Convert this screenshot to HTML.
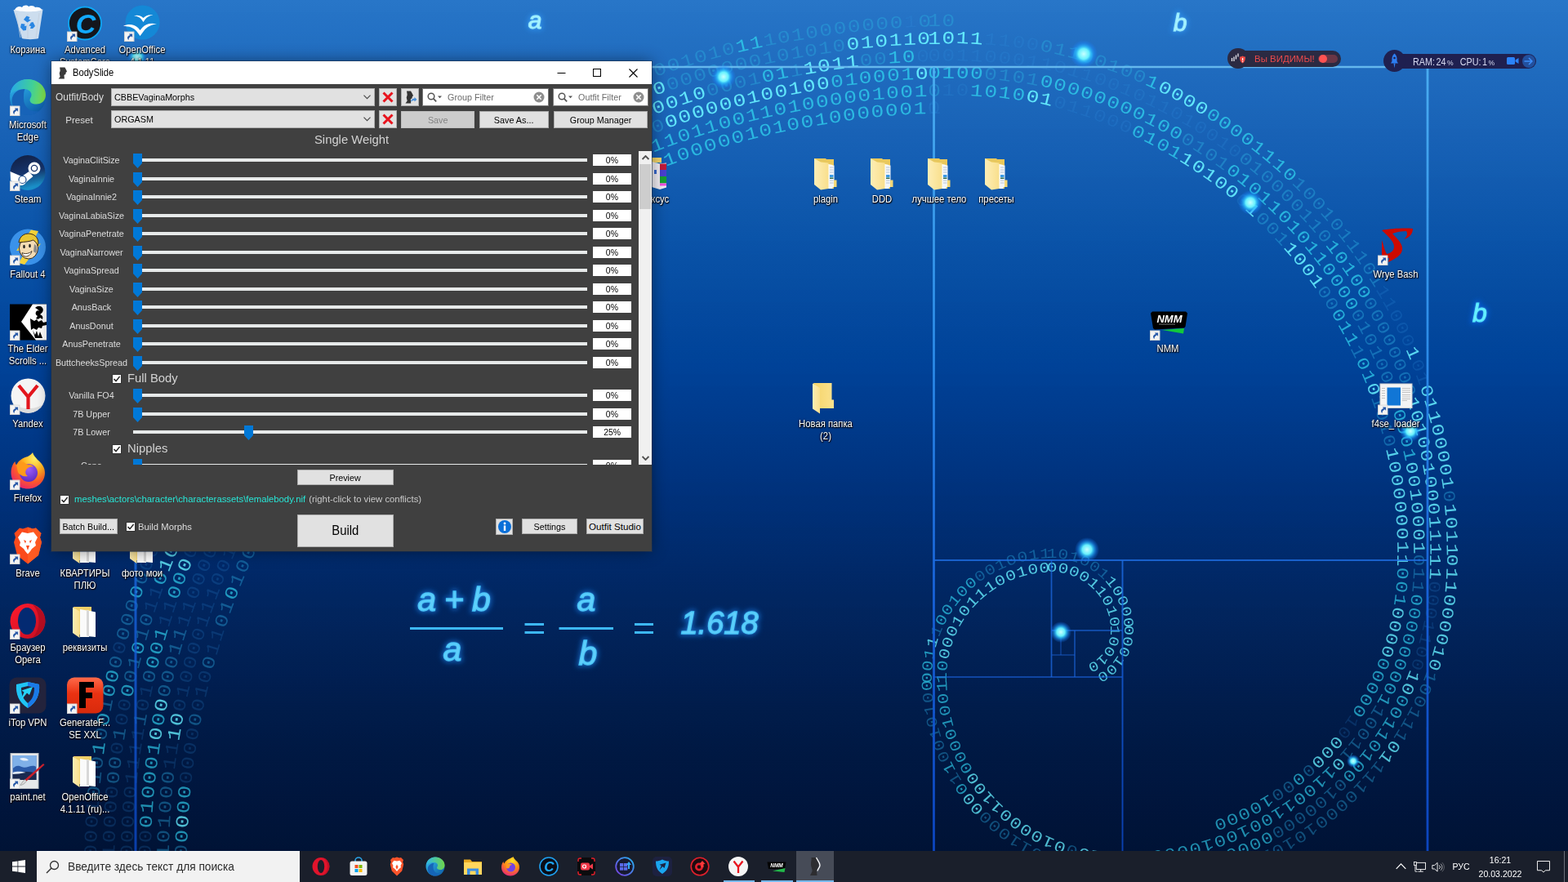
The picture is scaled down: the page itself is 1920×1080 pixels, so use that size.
<!DOCTYPE html>
<html lang="ru">
<head>
<meta charset="utf-8">
<title>Desktop - BodySlide</title>
<style>
*{box-sizing:border-box;margin:0;padding:0}
html,body{width:1920px;height:1080px;overflow:hidden;background:#021338}
body{font-family:"Liberation Sans",sans-serif;font-size:12px;color:#fff}
#desk{position:absolute;left:0;top:0;width:1920px;height:1080px;overflow:hidden;
 background:linear-gradient(180deg,#2876c8 0px,#1a64b8 150px,#0a53a8 300px,#004298 450px,#00327c 600px,#02255e 750px,#011a46 900px,#011336 1040px,#011336 1080px)}
#wall{position:absolute;left:0;top:0;width:1920px;height:1080px}
.abs{position:absolute}
</style>
</head>
<body>
<div id="desk">
<svg id="wall" width="1920" height="1080" viewBox="0 0 1920 1080">
<defs>
<filter id="gl" x="-50%" y="-50%" width="200%" height="200%"><feGaussianBlur stdDeviation="3.2"/></filter>
<filter id="gl2" x="-50%" y="-50%" width="200%" height="200%"><feGaussianBlur stdDeviation="1.2"/></filter>
<filter id="dg" x="-5%" y="-5%" width="110%" height="110%"><feGaussianBlur stdDeviation="0.35"/></filter>
<linearGradient id="dim" gradientUnits="userSpaceOnUse" x1="0" y1="0" x2="0" y2="1080"><stop offset="0" stop-color="#2876c8" stop-opacity="0"/><stop offset="0.139" stop-color="#1a64b8" stop-opacity="0.02"/><stop offset="0.278" stop-color="#0a53a8" stop-opacity="0.05"/><stop offset="0.417" stop-color="#004298" stop-opacity="0.09"/><stop offset="0.556" stop-color="#00327c" stop-opacity="0.13"/><stop offset="0.694" stop-color="#02255e" stop-opacity="0.16"/><stop offset="0.833" stop-color="#011a46" stop-opacity="0.18"/><stop offset="0.963" stop-color="#011336" stop-opacity="0.2"/><stop offset="1" stop-color="#011336" stop-opacity="0.2"/></linearGradient>
<linearGradient id="vl" gradientUnits="userSpaceOnUse" x1="0" y1="82" x2="0" y2="1060"><stop offset="0" stop-color="#4cb0f2"/><stop offset="0.35" stop-color="#2e90ec"/><stop offset="0.68" stop-color="#1762dc"/><stop offset="1" stop-color="#0b46c4"/></linearGradient>
<radialGradient id="dot"><stop offset="0" stop-color="#c8ffff"/><stop offset="0.38" stop-color="#6af4ff" stop-opacity="0.98"/><stop offset="0.55" stop-color="#2fc0ff" stop-opacity="0.8"/><stop offset="0.78" stop-color="#1a8cff" stop-opacity="0.4"/><stop offset="1" stop-color="#1c80ff" stop-opacity="0"/></radialGradient>

</defs>
<g font-family="'Liberation Mono','DejaVu Sans Mono',monospace" text-anchor="middle" filter="url(#dg)"><g fill="#66efff" fill-opacity="0.95"><text transform="translate(230.4 1006.3) rotate(273.4) scale(1.22 1)" font-size="22.4">0</text><text transform="translate(465.2 444.6) rotate(312.2) scale(1.22 1)" font-size="22.0">0</text><text transform="translate(514.2 394.3) rotate(316.6) scale(1.22 1)" font-size="22.0">0</text><text transform="translate(540.1 370.6) rotate(318.8) scale(1.22 1)" font-size="21.9">0</text><text transform="translate(790.4 213.9) rotate(337.3) scale(1.22 1)" font-size="21.7">0</text><text transform="translate(220.3 899.9) rotate(279.8) scale(1.22 1)" font-size="22.3">1</text><text transform="translate(223.5 882.3) rotate(280.9) scale(1.22 1)" font-size="22.3">0</text><text transform="translate(1263.1 124.9) rotate(372.0) scale(1.22 1)" font-size="21.4">0</text><text transform="translate(1279.8 128.0) rotate(373.7) scale(1.22 1)" font-size="21.3">1</text><text transform="translate(1449.9 200.5) rotate(392.2) scale(1.22 1)" font-size="21.1">1</text><text transform="translate(1463.9 209.7) rotate(393.9) scale(1.22 1)" font-size="21.1">0</text><text transform="translate(1477.7 219.3) rotate(395.6) scale(1.22 1)" font-size="21.0">1</text><text transform="translate(1491.1 229.2) rotate(397.2) scale(1.22 1)" font-size="21.0">0</text><text transform="translate(1504.2 239.6) rotate(398.9) scale(1.22 1)" font-size="21.0">0</text><text transform="translate(1529.5 261.3) rotate(402.2) scale(1.22 1)" font-size="20.9">1</text><text transform="translate(1576.0 309.0) rotate(408.9) scale(1.22 1)" font-size="20.9">1</text><text transform="translate(1586.7 321.6) rotate(410.5) scale(1.22 1)" font-size="20.8">0</text><text transform="translate(1597.0 334.6) rotate(412.2) scale(1.22 1)" font-size="20.8">0</text><text transform="translate(1606.9 347.9) rotate(413.9) scale(1.22 1)" font-size="20.8">1</text><text transform="translate(1675.8 478.7) rotate(428.7) scale(1.22 1)" font-size="20.6">0</text><text transform="translate(1698.6 557.1) rotate(436.9) scale(1.22 1)" font-size="20.5">1</text><text transform="translate(1701.8 573.1) rotate(438.6) scale(1.22 1)" font-size="20.5">0</text><text transform="translate(1704.5 589.1) rotate(440.2) scale(1.22 1)" font-size="20.4">0</text><text transform="translate(1706.8 605.2) rotate(441.8) scale(1.22 1)" font-size="20.4">0</text><text transform="translate(1708.6 621.4) rotate(443.5) scale(1.22 1)" font-size="20.4">0</text><text transform="translate(1709.9 637.5) rotate(445.1) scale(1.22 1)" font-size="20.4">0</text><text transform="translate(1710.8 653.7) rotate(446.7) scale(1.22 1)" font-size="20.3">0</text><text transform="translate(1711.2 669.9) rotate(448.4) scale(1.22 1)" font-size="20.3">1</text><text transform="translate(1711.2 686.0) rotate(90.0) scale(1.22 1)" font-size="20.3">1</text><text transform="translate(1705.3 749.6) rotate(100.9) scale(1.22 1)" font-size="20.2">0</text><text transform="translate(1702.0 765.2) rotate(103.6) scale(1.22 1)" font-size="20.2">0</text><text transform="translate(1697.9 780.6) rotate(106.3) scale(1.22 1)" font-size="20.1">0</text><text transform="translate(1693.1 795.8) rotate(109.0) scale(1.22 1)" font-size="20.1">0</text><text transform="translate(1631.2 905.2) rotate(130.4) scale(1.22 1)" font-size="19.9">0</text><text transform="translate(1620.7 916.9) rotate(133.1) scale(1.22 1)" font-size="19.9">0</text><text transform="translate(1609.8 928.2) rotate(135.8) scale(1.22 1)" font-size="19.8">0</text><text transform="translate(197.9 899.8) rotate(279.6) scale(1.22 1)" font-size="22.3">0</text><text transform="translate(204.5 864.7) rotate(281.7) scale(1.22 1)" font-size="22.3">0</text><text transform="translate(824.2 154.7) rotate(340.5) scale(1.22 1)" font-size="21.7">0</text><text transform="translate(840.6 149.1) rotate(341.6) scale(1.22 1)" font-size="21.7">0</text><text transform="translate(857.1 143.7) rotate(342.6) scale(1.22 1)" font-size="21.7">0</text><text transform="translate(873.7 138.7) rotate(343.7) scale(1.22 1)" font-size="21.7">0</text><text transform="translate(890.4 134.0) rotate(344.7) scale(1.22 1)" font-size="21.7">0</text><text transform="translate(907.1 129.5) rotate(345.7) scale(1.22 1)" font-size="21.7">0</text><text transform="translate(924.0 125.4) rotate(346.8) scale(1.22 1)" font-size="21.6">1</text><text transform="translate(940.8 121.6) rotate(347.8) scale(1.22 1)" font-size="21.6">0</text><text transform="translate(957.8 118.1) rotate(348.8) scale(1.22 1)" font-size="21.6">0</text><text transform="translate(974.8 114.9) rotate(349.8) scale(1.22 1)" font-size="21.6">1</text><text transform="translate(991.8 112.0) rotate(350.9) scale(1.22 1)" font-size="21.6">0</text><text transform="translate(1008.8 109.0) rotate(351.9) scale(1.22 1)" font-size="21.6">0</text><text transform="translate(1128.8 96.6) rotate(359.1) scale(1.22 1)" font-size="21.5">0</text><text transform="translate(1722.5 574.1) rotate(439.0) scale(1.22 1)" font-size="20.5">0</text><text transform="translate(1725.1 590.1) rotate(440.6) scale(1.22 1)" font-size="20.4">0</text><text transform="translate(1727.3 606.3) rotate(442.2) scale(1.22 1)" font-size="20.4">1</text><text transform="translate(1728.9 622.4) rotate(443.8) scale(1.22 1)" font-size="20.4">0</text><text transform="translate(1730.2 638.6) rotate(445.4) scale(1.22 1)" font-size="20.4">0</text><text transform="translate(1731.0 654.8) rotate(447.0) scale(1.22 1)" font-size="20.3">0</text><text transform="translate(1731.3 671.0) rotate(448.5) scale(1.22 1)" font-size="20.3">1</text><text transform="translate(1634.3 931.2) rotate(133.3) scale(1.22 1)" font-size="19.9">0</text><text transform="translate(1358.8 1043.5) rotate(184.1) scale(1.22 1)" font-size="19.4">1</text><text transform="translate(1343.8 1041.9) rotate(188.1) scale(1.22 1)" font-size="19.3">1</text><text transform="translate(1328.9 1039.3) rotate(192.2) scale(1.22 1)" font-size="19.3">0</text><text transform="translate(1300.0 1031.0) rotate(200.2) scale(1.22 1)" font-size="19.2">0</text><text transform="translate(1286.1 1025.3) rotate(204.2) scale(1.22 1)" font-size="19.1">1</text><text transform="translate(1272.7 1018.8) rotate(208.2) scale(1.22 1)" font-size="19.1">0</text><text transform="translate(1259.7 1011.3) rotate(212.2) scale(1.22 1)" font-size="19.1">0</text><text transform="translate(1247.4 1002.9) rotate(216.2) scale(1.22 1)" font-size="19.0">0</text><text transform="translate(1235.7 993.7) rotate(220.2) scale(1.22 1)" font-size="19.0">0</text><text transform="translate(1224.6 983.8) rotate(224.2) scale(1.22 1)" font-size="18.9">1</text><text transform="translate(1214.3 973.1) rotate(228.1) scale(1.22 1)" font-size="18.9">1</text><text transform="translate(1204.8 961.8) rotate(232.1) scale(1.22 1)" font-size="18.9">0</text><text transform="translate(1196.1 949.8) rotate(236.0) scale(1.22 1)" font-size="18.8">0</text><text transform="translate(1162.2 801.8) rotate(282.6) scale(1.22 1)" font-size="18.3">0</text><text transform="translate(1166.0 788.3) rotate(288.9) scale(1.22 1)" font-size="18.3">0</text><text transform="translate(1171.2 775.2) rotate(295.1) scale(1.22 1)" font-size="18.2">0</text><text transform="translate(1177.8 762.9) rotate(301.3) scale(1.22 1)" font-size="18.1">1</text><text transform="translate(1185.6 751.3) rotate(307.5) scale(1.22 1)" font-size="18.0">0</text><text transform="translate(1194.6 740.8) rotate(313.7) scale(1.22 1)" font-size="18.0">1</text><text transform="translate(1204.6 731.2) rotate(319.8) scale(1.22 1)" font-size="17.9">1</text><text transform="translate(1215.6 722.9) rotate(325.9) scale(1.22 1)" font-size="17.8">1</text><text transform="translate(1227.3 715.8) rotate(332.0) scale(1.22 1)" font-size="17.8">0</text><text transform="translate(1239.7 709.9) rotate(338.1) scale(1.22 1)" font-size="17.7">0</text><text transform="translate(1252.6 705.5) rotate(344.1) scale(1.22 1)" font-size="17.6">1</text><text transform="translate(1265.8 702.4) rotate(350.1) scale(1.22 1)" font-size="17.5">0</text><text transform="translate(1279.2 700.7) rotate(356.1) scale(1.22 1)" font-size="17.5">0</text><text transform="translate(1288.0 700.4) rotate(360.0) scale(1.22 1)" font-size="17.4">0</text><text transform="translate(1300.9 701.5) rotate(370.4) scale(1.22 1)" font-size="17.4">0</text><text transform="translate(1313.4 704.9) rotate(380.7) scale(1.22 1)" font-size="17.3">0</text><text transform="translate(1325.0 710.5) rotate(391.1) scale(1.22 1)" font-size="17.2">0</text><text transform="translate(1335.4 718.1) rotate(401.3) scale(1.22 1)" font-size="17.2">1</text><text transform="translate(1344.3 727.3) rotate(411.6) scale(1.22 1)" font-size="17.1">1</text><text transform="translate(1351.4 738.0) rotate(421.8) scale(1.22 1)" font-size="17.1">0</text><text transform="translate(1356.4 749.7) rotate(431.9) scale(1.22 1)" font-size="17.0">1</text><text transform="translate(1359.3 762.0) rotate(442.0) scale(1.22 1)" font-size="17.0">0</text><text transform="translate(1360.0 772.0) rotate(90.0) scale(1.22 1)" font-size="16.9">1</text><text transform="translate(1358.5 784.0) rotate(105.7) scale(1.22 1)" font-size="16.8">0</text><text transform="translate(1353.7 795.0) rotate(121.4) scale(1.22 1)" font-size="16.7">0</text><text transform="translate(1346.2 804.3) rotate(136.9) scale(1.22 1)" font-size="16.7">1</text><text transform="translate(1336.6 811.3) rotate(152.3) scale(1.22 1)" font-size="16.6">0</text><text transform="translate(232.9 694.4) rotate(291.9) scale(1.22 1)" font-size="22.2">0</text><text transform="translate(420.1 397.0) rotate(312.5) scale(1.22 1)" font-size="22.0">1</text><text transform="translate(456.7 359.1) rotate(315.6) scale(1.22 1)" font-size="22.0">0</text><text transform="translate(508.6 311.8) rotate(319.7) scale(1.22 1)" font-size="21.9">1</text><text transform="translate(636.2 220.0) rotate(328.8) scale(1.22 1)" font-size="21.8">0</text><text transform="translate(651.2 211.1) rotate(329.9) scale(1.22 1)" font-size="21.8">1</text><text transform="translate(666.4 202.4) rotate(330.9) scale(1.22 1)" font-size="21.8">0</text><text transform="translate(681.7 194.1) rotate(331.9) scale(1.22 1)" font-size="21.8">1</text><text transform="translate(697.1 186.0) rotate(332.9) scale(1.22 1)" font-size="21.8">0</text><text transform="translate(712.7 178.2) rotate(333.9) scale(1.22 1)" font-size="21.8">1</text><text transform="translate(728.4 170.7) rotate(335.0) scale(1.22 1)" font-size="21.8">0</text><text transform="translate(744.2 163.5) rotate(336.0) scale(1.22 1)" font-size="21.8">1</text><text transform="translate(760.2 156.6) rotate(337.0) scale(1.22 1)" font-size="21.7">0</text><text transform="translate(776.2 149.9) rotate(338.0) scale(1.22 1)" font-size="21.7">0</text><text transform="translate(808.7 137.5) rotate(340.0) scale(1.22 1)" font-size="21.7">0</text><text transform="translate(825.0 131.7) rotate(341.0) scale(1.22 1)" font-size="21.7">0</text><text transform="translate(841.5 126.2) rotate(342.1) scale(1.22 1)" font-size="21.7">1</text><text transform="translate(858.0 121.0) rotate(343.1) scale(1.22 1)" font-size="21.7">0</text><text transform="translate(992.9 90.1) rotate(351.1) scale(1.22 1)" font-size="21.6">1</text><text transform="translate(1009.9 87.2) rotate(352.2) scale(1.22 1)" font-size="21.6">0</text><text transform="translate(1027.0 84.6) rotate(353.2) scale(1.22 1)" font-size="21.6">1</text><text transform="translate(1044.1 82.3) rotate(354.2) scale(1.22 1)" font-size="21.6">1</text><text transform="translate(1724.5 495.7) rotate(431.8) scale(1.22 1)" font-size="20.5">1</text><text transform="translate(1729.1 511.4) rotate(433.4) scale(1.22 1)" font-size="20.5">0</text><text transform="translate(1733.3 527.2) rotate(434.9) scale(1.22 1)" font-size="20.5">1</text><text transform="translate(1737.0 543.1) rotate(436.4) scale(1.22 1)" font-size="20.5">0</text><text transform="translate(1740.4 559.0) rotate(438.0) scale(1.22 1)" font-size="20.5">0</text><text transform="translate(1743.2 575.1) rotate(439.5) scale(1.22 1)" font-size="20.4">1</text><text transform="translate(1745.7 591.2) rotate(441.0) scale(1.22 1)" font-size="20.4">0</text><text transform="translate(1747.7 607.3) rotate(442.6) scale(1.22 1)" font-size="20.4">0</text><text transform="translate(1749.3 623.5) rotate(444.1) scale(1.22 1)" font-size="20.4">0</text><text transform="translate(1750.4 639.7) rotate(445.6) scale(1.22 1)" font-size="20.4">1</text><text transform="translate(1751.2 655.9) rotate(447.2) scale(1.22 1)" font-size="20.3">1</text><text transform="translate(1751.4 672.1) rotate(448.7) scale(1.22 1)" font-size="20.3">1</text><text transform="translate(1751.3 686.0) rotate(90.0) scale(1.22 1)" font-size="20.3">1</text><text transform="translate(1751.0 702.1) rotate(92.4) scale(1.22 1)" font-size="20.3">1</text><text transform="translate(1724.2 826.4) rotate(111.8) scale(1.22 1)" font-size="20.1">1</text><text transform="translate(1718.0 841.0) rotate(114.3) scale(1.22 1)" font-size="20.1">0</text><text transform="translate(1200.7 986.0) rotate(228.0) scale(1.22 1)" font-size="18.9">0</text><text transform="translate(1191.2 974.6) rotate(231.6) scale(1.22 1)" font-size="18.9">0</text><text transform="translate(1147.1 787.9) rotate(286.6) scale(1.22 1)" font-size="18.3">1</text><text transform="translate(1356.7 715.7) rotate(410.7) scale(1.22 1)" font-size="17.1">1</text><text transform="translate(1364.2 726.3) rotate(419.0) scale(1.22 1)" font-size="17.1">0</text><text transform="translate(1370.0 737.8) rotate(427.4) scale(1.22 1)" font-size="17.0">0</text><text transform="translate(1374.1 750.1) rotate(435.7) scale(1.22 1)" font-size="17.0">0</text><text transform="translate(1376.3 762.7) rotate(444.0) scale(1.22 1)" font-size="17.0">0</text><text transform="translate(1376.8 772.0) rotate(90.0) scale(1.22 1)" font-size="16.9">0</text><text transform="translate(1375.5 784.4) rotate(101.8) scale(1.22 1)" font-size="16.9">0</text><text transform="translate(1371.7 796.2) rotate(113.5) scale(1.22 1)" font-size="16.8">0</text><text transform="translate(1365.7 807.0) rotate(125.2) scale(1.22 1)" font-size="16.7">1</text><text transform="translate(1357.6 816.3) rotate(136.8) scale(1.22 1)" font-size="16.7">0</text><text transform="translate(1347.8 823.7) rotate(148.4) scale(1.22 1)" font-size="16.6">0</text><text transform="translate(209.5 694.0) rotate(291.4) scale(1.22 1)" font-size="22.2">1</text><text transform="translate(216.1 677.5) rotate(292.4) scale(1.22 1)" font-size="22.2">0</text><text transform="translate(681.9 169.6) rotate(332.6) scale(1.22 1)" font-size="21.8">0</text><text transform="translate(697.4 161.7) rotate(333.6) scale(1.22 1)" font-size="21.8">0</text><text transform="translate(713.1 154.1) rotate(334.6) scale(1.22 1)" font-size="21.8">0</text><text transform="translate(728.9 146.8) rotate(335.6) scale(1.22 1)" font-size="21.8">1</text><text transform="translate(809.5 114.4) rotate(340.5) scale(1.22 1)" font-size="21.7">0</text><text transform="translate(1045.2 60.6) rotate(354.4) scale(1.22 1)" font-size="21.6">0</text><text transform="translate(1062.4 58.7) rotate(355.3) scale(1.22 1)" font-size="21.6">1</text><text transform="translate(1079.6 57.0) rotate(356.3) scale(1.22 1)" font-size="21.6">0</text><text transform="translate(1096.8 55.7) rotate(357.3) scale(1.22 1)" font-size="21.5">1</text><text transform="translate(1114.0 54.7) rotate(358.3) scale(1.22 1)" font-size="21.5">1</text><text transform="translate(1131.2 53.9) rotate(359.3) scale(1.22 1)" font-size="21.5">0</text><text transform="translate(1144.0 53.5) rotate(360.0) scale(1.22 1)" font-size="21.5">1</text><text transform="translate(1161.1 53.2) rotate(361.6) scale(1.22 1)" font-size="21.5">0</text><text transform="translate(1178.3 53.3) rotate(363.1) scale(1.22 1)" font-size="21.5">1</text><text transform="translate(1195.4 53.8) rotate(364.6) scale(1.22 1)" font-size="21.5">1</text><text transform="translate(1423.6 113.8) rotate(386.0) scale(1.22 1)" font-size="21.2">0</text><text transform="translate(1438.6 121.5) rotate(387.6) scale(1.22 1)" font-size="21.1">0</text><text transform="translate(1453.3 129.6) rotate(389.1) scale(1.22 1)" font-size="21.1">0</text><text transform="translate(1467.9 138.0) rotate(390.6) scale(1.22 1)" font-size="21.1">0</text><text transform="translate(1724.3 434.6) rotate(426.6) scale(1.22 1)" font-size="20.6">1</text><text transform="translate(1741.2 480.9) rotate(431.0) scale(1.22 1)" font-size="20.6">0</text><text transform="translate(1746.0 496.5) rotate(432.5) scale(1.22 1)" font-size="20.5">1</text><text transform="translate(1750.4 512.3) rotate(434.0) scale(1.22 1)" font-size="20.5">1</text><text transform="translate(1754.4 528.1) rotate(435.5) scale(1.22 1)" font-size="20.5">0</text><text transform="translate(1758.0 544.0) rotate(437.0) scale(1.22 1)" font-size="20.5">0</text><text transform="translate(1761.2 560.1) rotate(438.5) scale(1.22 1)" font-size="20.5">0</text><text transform="translate(1763.9 576.1) rotate(439.9) scale(1.22 1)" font-size="20.4">0</text><text transform="translate(1766.2 592.2) rotate(441.4) scale(1.22 1)" font-size="20.4">1</text><text transform="translate(1769.6 624.6) rotate(444.4) scale(1.22 1)" font-size="20.4">1</text><text transform="translate(1770.7 640.8) rotate(445.9) scale(1.22 1)" font-size="20.4">0</text><text transform="translate(1771.3 657.0) rotate(447.4) scale(1.22 1)" font-size="20.3">1</text><text transform="translate(1771.6 673.2) rotate(448.8) scale(1.22 1)" font-size="20.3">1</text><text transform="translate(1771.5 686.0) rotate(90.0) scale(1.22 1)" font-size="20.3">0</text><text transform="translate(1771.1 702.1) rotate(92.3) scale(1.22 1)" font-size="20.3">1</text><text transform="translate(1770.1 718.1) rotate(94.6) scale(1.22 1)" font-size="20.3">1</text><text transform="translate(1768.5 734.1) rotate(96.9) scale(1.22 1)" font-size="20.2">0</text><text transform="translate(1766.2 749.9) rotate(99.3) scale(1.22 1)" font-size="20.2">0</text><text transform="translate(1763.3 765.6) rotate(101.6) scale(1.22 1)" font-size="20.2">0</text><text transform="translate(1759.7 781.2) rotate(103.9) scale(1.22 1)" font-size="20.2">0</text><text transform="translate(1755.5 796.6) rotate(106.2) scale(1.22 1)" font-size="20.1">1</text><text transform="translate(1750.8 811.9) rotate(108.5) scale(1.22 1)" font-size="20.1">0</text><text transform="translate(1701.2 910.9) rotate(124.5) scale(1.22 1)" font-size="20.0">0</text><text transform="translate(1692.0 923.8) rotate(126.8) scale(1.22 1)" font-size="19.9">1</text></g>
<g fill="#30cdec" fill-opacity="0.82"><text transform="translate(229.5 1024.2) rotate(272.2) scale(1.22 1)" font-size="22.4">0</text><text transform="translate(231.6 988.5) rotate(274.5) scale(1.22 1)" font-size="22.4">0</text><text transform="translate(233.1 970.7) rotate(275.6) scale(1.22 1)" font-size="22.4">0</text><text transform="translate(290.3 728.8) rotate(291.2) scale(1.22 1)" font-size="22.2">0</text><text transform="translate(318.4 663.7) rotate(295.6) scale(1.22 1)" font-size="22.2">1</text><text transform="translate(409.4 512.6) rotate(306.7) scale(1.22 1)" font-size="22.1">0</text><text transform="translate(420.0 498.5) rotate(307.8) scale(1.22 1)" font-size="22.0">0</text><text transform="translate(453.5 457.7) rotate(311.1) scale(1.22 1)" font-size="22.0">1</text><text transform="translate(477.1 431.6) rotate(313.3) scale(1.22 1)" font-size="22.0">1</text><text transform="translate(489.2 418.9) rotate(314.4) scale(1.22 1)" font-size="22.0">0</text><text transform="translate(501.6 406.5) rotate(315.5) scale(1.22 1)" font-size="22.0">0</text><text transform="translate(527.0 382.3) rotate(317.7) scale(1.22 1)" font-size="21.9">0</text><text transform="translate(553.4 359.2) rotate(319.9) scale(1.22 1)" font-size="21.9">0</text><text transform="translate(566.8 348.0) rotate(321.0) scale(1.22 1)" font-size="21.9">1</text><text transform="translate(806.5 207.3) rotate(338.4) scale(1.22 1)" font-size="21.7">0</text><text transform="translate(822.7 201.1) rotate(339.5) scale(1.22 1)" font-size="21.7">1</text><text transform="translate(839.0 195.1) rotate(340.6) scale(1.22 1)" font-size="21.7">0</text><text transform="translate(855.4 189.5) rotate(341.7) scale(1.22 1)" font-size="21.7">0</text><text transform="translate(871.9 184.1) rotate(342.7) scale(1.22 1)" font-size="21.7">0</text><text transform="translate(888.5 179.1) rotate(343.8) scale(1.22 1)" font-size="21.7">0</text><text transform="translate(905.2 174.4) rotate(344.9) scale(1.22 1)" font-size="21.7">0</text><text transform="translate(921.9 170.0) rotate(346.0) scale(1.22 1)" font-size="21.7">1</text><text transform="translate(938.8 166.0) rotate(347.1) scale(1.22 1)" font-size="21.6">0</text><text transform="translate(955.6 162.2) rotate(348.2) scale(1.22 1)" font-size="21.6">1</text><text transform="translate(972.6 158.8) rotate(349.2) scale(1.22 1)" font-size="21.6">0</text><text transform="translate(989.6 155.7) rotate(350.3) scale(1.22 1)" font-size="21.6">0</text><text transform="translate(1006.6 152.8) rotate(351.4) scale(1.22 1)" font-size="21.6">1</text><text transform="translate(1023.6 149.9) rotate(352.5) scale(1.22 1)" font-size="21.6">0</text><text transform="translate(1040.7 147.3) rotate(353.5) scale(1.22 1)" font-size="21.6">0</text><text transform="translate(1057.8 145.1) rotate(354.6) scale(1.22 1)" font-size="21.6">0</text><text transform="translate(1074.9 143.2) rotate(355.7) scale(1.22 1)" font-size="21.6">0</text><text transform="translate(1092.1 141.6) rotate(356.8) scale(1.22 1)" font-size="21.5">0</text><text transform="translate(1109.3 140.3) rotate(357.8) scale(1.22 1)" font-size="21.5">0</text><text transform="translate(1126.5 139.4) rotate(358.9) scale(1.22 1)" font-size="21.5">1</text><text transform="translate(727.7 218.9) rotate(333.7) scale(1.22 1)" font-size="21.8">0</text><text transform="translate(743.3 211.3) rotate(334.7) scale(1.22 1)" font-size="21.8">0</text><text transform="translate(759.1 204.0) rotate(335.8) scale(1.22 1)" font-size="21.8">0</text><text transform="translate(775.0 197.0) rotate(336.8) scale(1.22 1)" font-size="21.7">0</text><text transform="translate(791.1 190.3) rotate(337.9) scale(1.22 1)" font-size="21.7">0</text><text transform="translate(807.2 183.9) rotate(339.0) scale(1.22 1)" font-size="21.7">1</text><text transform="translate(823.5 177.8) rotate(340.0) scale(1.22 1)" font-size="21.7">1</text><text transform="translate(839.8 172.1) rotate(341.1) scale(1.22 1)" font-size="21.7">0</text><text transform="translate(856.3 166.6) rotate(342.1) scale(1.22 1)" font-size="21.7">1</text><text transform="translate(872.8 161.4) rotate(343.2) scale(1.22 1)" font-size="21.7">1</text><text transform="translate(889.4 156.5) rotate(344.3) scale(1.22 1)" font-size="21.7">0</text><text transform="translate(906.2 152.0) rotate(345.3) scale(1.22 1)" font-size="21.7">0</text><text transform="translate(922.9 147.7) rotate(346.4) scale(1.22 1)" font-size="21.7">1</text><text transform="translate(939.8 143.8) rotate(347.4) scale(1.22 1)" font-size="21.6">1</text><text transform="translate(956.7 140.1) rotate(348.5) scale(1.22 1)" font-size="21.6">0</text><text transform="translate(973.7 136.8) rotate(349.5) scale(1.22 1)" font-size="21.6">1</text><text transform="translate(990.7 133.8) rotate(350.6) scale(1.22 1)" font-size="21.6">0</text><text transform="translate(1007.7 130.9) rotate(351.7) scale(1.22 1)" font-size="21.6">0</text><text transform="translate(1024.7 128.1) rotate(352.7) scale(1.22 1)" font-size="21.6">0</text><text transform="translate(1041.8 125.6) rotate(353.8) scale(1.22 1)" font-size="21.6">0</text><text transform="translate(1058.9 123.5) rotate(354.8) scale(1.22 1)" font-size="21.6">0</text><text transform="translate(1076.1 121.6) rotate(355.9) scale(1.22 1)" font-size="21.6">1</text><text transform="translate(1093.3 120.1) rotate(356.9) scale(1.22 1)" font-size="21.5">0</text><text transform="translate(1110.4 118.9) rotate(358.0) scale(1.22 1)" font-size="21.5">0</text><text transform="translate(1127.6 118.0) rotate(359.0) scale(1.22 1)" font-size="21.5">1</text><text transform="translate(1195.3 117.6) rotate(365.2) scale(1.22 1)" font-size="21.4">1</text><text transform="translate(1212.4 118.6) rotate(366.9) scale(1.22 1)" font-size="21.4">0</text><text transform="translate(1229.4 120.2) rotate(368.6) scale(1.22 1)" font-size="21.4">1</text><text transform="translate(1246.3 122.3) rotate(370.3) scale(1.22 1)" font-size="21.4">0</text><text transform="translate(1391.1 167.9) rotate(385.5) scale(1.22 1)" font-size="21.2">0</text><text transform="translate(1406.2 175.4) rotate(387.2) scale(1.22 1)" font-size="21.1">1</text><text transform="translate(1421.0 183.4) rotate(388.9) scale(1.22 1)" font-size="21.1">0</text><text transform="translate(1435.6 191.7) rotate(390.5) scale(1.22 1)" font-size="21.1">1</text><text transform="translate(1633.7 389.6) rotate(418.8) scale(1.22 1)" font-size="20.7">0</text><text transform="translate(1641.8 403.9) rotate(420.5) scale(1.22 1)" font-size="20.7">1</text><text transform="translate(1649.5 418.5) rotate(422.1) scale(1.22 1)" font-size="20.7">1</text><text transform="translate(1663.5 448.2) rotate(425.4) scale(1.22 1)" font-size="20.6">0</text><text transform="translate(1669.9 463.4) rotate(427.1) scale(1.22 1)" font-size="20.6">1</text><text transform="translate(1710.8 702.0) rotate(92.7) scale(1.22 1)" font-size="20.3">0</text><text transform="translate(1709.7 718.0) rotate(95.4) scale(1.22 1)" font-size="20.2">0</text><text transform="translate(1707.9 733.9) rotate(98.2) scale(1.22 1)" font-size="20.2">1</text><text transform="translate(1687.7 810.7) rotate(111.7) scale(1.22 1)" font-size="20.1">0</text><text transform="translate(1681.5 825.3) rotate(114.4) scale(1.22 1)" font-size="20.1">0</text><text transform="translate(1674.7 839.6) rotate(117.1) scale(1.22 1)" font-size="20.0">0</text><text transform="translate(1667.2 853.5) rotate(119.7) scale(1.22 1)" font-size="20.0">0</text><text transform="translate(1659.1 867.1) rotate(122.4) scale(1.22 1)" font-size="20.0">0</text><text transform="translate(1586.4 949.0) rotate(141.1) scale(1.22 1)" font-size="19.8">0</text><text transform="translate(1548.1 976.0) rotate(149.0) scale(1.22 1)" font-size="19.7">1</text><text transform="translate(1534.6 983.7) rotate(151.6) scale(1.22 1)" font-size="19.7">0</text><text transform="translate(1520.8 990.8) rotate(154.3) scale(1.22 1)" font-size="19.7">0</text><text transform="translate(1506.7 997.3) rotate(156.9) scale(1.22 1)" font-size="19.6">0</text><text transform="translate(1492.3 1003.1) rotate(159.5) scale(1.22 1)" font-size="19.6">0</text><text transform="translate(186.0 1006.3) rotate(273.2) scale(1.22 1)" font-size="22.4">0</text><text transform="translate(187.1 988.4) rotate(274.3) scale(1.22 1)" font-size="22.4">1</text><text transform="translate(188.6 970.6) rotate(275.3) scale(1.22 1)" font-size="22.4">0</text><text transform="translate(190.4 952.8) rotate(276.4) scale(1.22 1)" font-size="22.4">0</text><text transform="translate(192.6 935.1) rotate(277.5) scale(1.22 1)" font-size="22.3">0</text><text transform="translate(195.1 917.4) rotate(278.5) scale(1.22 1)" font-size="22.3">1</text><text transform="translate(201.0 882.2) rotate(280.7) scale(1.22 1)" font-size="22.3">0</text><text transform="translate(328.9 553.2) rotate(301.9) scale(1.22 1)" font-size="22.1">1</text><text transform="translate(564.5 294.7) rotate(322.9) scale(1.22 1)" font-size="21.9">0</text><text transform="translate(607.1 264.2) rotate(326.0) scale(1.22 1)" font-size="21.9">0</text><text transform="translate(621.7 254.6) rotate(327.0) scale(1.22 1)" font-size="21.8">0</text><text transform="translate(636.4 245.2) rotate(328.1) scale(1.22 1)" font-size="21.8">1</text><text transform="translate(651.3 236.1) rotate(329.1) scale(1.22 1)" font-size="21.8">1</text><text transform="translate(666.4 227.3) rotate(330.2) scale(1.22 1)" font-size="21.8">1</text><text transform="translate(681.6 218.7) rotate(331.2) scale(1.22 1)" font-size="21.8">0</text><text transform="translate(1025.9 106.3) rotate(352.9) scale(1.22 1)" font-size="21.6">0</text><text transform="translate(1043.0 103.9) rotate(354.0) scale(1.22 1)" font-size="21.6">1</text><text transform="translate(1060.1 101.9) rotate(355.0) scale(1.22 1)" font-size="21.6">0</text><text transform="translate(1077.2 100.1) rotate(356.0) scale(1.22 1)" font-size="21.6">0</text><text transform="translate(1094.4 98.6) rotate(357.0) scale(1.22 1)" font-size="21.5">0</text><text transform="translate(1111.6 97.5) rotate(358.1) scale(1.22 1)" font-size="21.5">1</text><text transform="translate(1144.0 96.1) rotate(360.0) scale(1.22 1)" font-size="21.5">0</text><text transform="translate(1161.1 95.7) rotate(361.7) scale(1.22 1)" font-size="21.5">1</text><text transform="translate(1178.3 95.8) rotate(363.3) scale(1.22 1)" font-size="21.5">0</text><text transform="translate(1195.4 96.3) rotate(365.0) scale(1.22 1)" font-size="21.4">0</text><text transform="translate(1280.0 106.5) rotate(373.2) scale(1.22 1)" font-size="21.3">0</text><text transform="translate(1296.4 110.5) rotate(374.8) scale(1.22 1)" font-size="21.3">0</text><text transform="translate(1312.8 115.1) rotate(376.5) scale(1.22 1)" font-size="21.3">0</text><text transform="translate(1328.9 120.2) rotate(378.1) scale(1.22 1)" font-size="21.3">0</text><text transform="translate(1344.9 125.8) rotate(379.7) scale(1.22 1)" font-size="21.2">0</text><text transform="translate(1360.7 131.8) rotate(381.4) scale(1.22 1)" font-size="21.2">0</text><text transform="translate(1376.3 138.2) rotate(383.0) scale(1.22 1)" font-size="21.2">0</text><text transform="translate(1391.8 145.1) rotate(384.6) scale(1.22 1)" font-size="21.2">0</text><text transform="translate(1407.0 152.4) rotate(386.2) scale(1.22 1)" font-size="21.2">1</text><text transform="translate(1421.9 160.1) rotate(387.9) scale(1.22 1)" font-size="21.1">0</text><text transform="translate(1436.7 168.2) rotate(389.5) scale(1.22 1)" font-size="21.1">0</text><text transform="translate(1506.4 214.7) rotate(397.6) scale(1.22 1)" font-size="21.0">0</text><text transform="translate(1519.4 225.1) rotate(399.2) scale(1.22 1)" font-size="21.0">1</text><text transform="translate(1532.2 235.9) rotate(400.8) scale(1.22 1)" font-size="21.0">0</text><text transform="translate(1544.6 247.0) rotate(402.4) scale(1.22 1)" font-size="20.9">1</text><text transform="translate(1556.7 258.5) rotate(404.0) scale(1.22 1)" font-size="20.9">1</text><text transform="translate(1568.5 270.3) rotate(405.6) scale(1.22 1)" font-size="20.9">0</text><text transform="translate(1579.9 282.4) rotate(407.2) scale(1.22 1)" font-size="20.9">1</text><text transform="translate(1591.0 294.8) rotate(408.8) scale(1.22 1)" font-size="20.9">0</text><text transform="translate(1601.7 307.4) rotate(410.4) scale(1.22 1)" font-size="20.8">1</text><text transform="translate(1612.1 320.4) rotate(412.0) scale(1.22 1)" font-size="20.8">1</text><text transform="translate(1622.0 333.6) rotate(413.6) scale(1.22 1)" font-size="20.8">0</text><text transform="translate(1631.5 347.2) rotate(415.2) scale(1.22 1)" font-size="20.8">0</text><text transform="translate(1640.5 361.1) rotate(416.8) scale(1.22 1)" font-size="20.8">0</text><text transform="translate(1649.1 375.2) rotate(418.4) scale(1.22 1)" font-size="20.7">0</text><text transform="translate(1702.9 494.9) rotate(431.1) scale(1.22 1)" font-size="20.6">0</text><text transform="translate(1707.7 510.5) rotate(432.7) scale(1.22 1)" font-size="20.5">0</text><text transform="translate(1712.1 526.3) rotate(434.3) scale(1.22 1)" font-size="20.5">0</text><text transform="translate(1716.0 542.1) rotate(435.9) scale(1.22 1)" font-size="20.5">0</text><text transform="translate(1719.5 558.1) rotate(437.5) scale(1.22 1)" font-size="20.5">1</text><text transform="translate(1728.1 733.9) rotate(97.7) scale(1.22 1)" font-size="20.2">0</text><text transform="translate(1725.6 749.7) rotate(100.3) scale(1.22 1)" font-size="20.2">0</text><text transform="translate(1722.4 765.4) rotate(102.8) scale(1.22 1)" font-size="20.2">0</text><text transform="translate(1718.6 780.9) rotate(105.4) scale(1.22 1)" font-size="20.1">0</text><text transform="translate(1714.0 796.1) rotate(107.9) scale(1.22 1)" font-size="20.1">0</text><text transform="translate(1708.8 811.1) rotate(110.5) scale(1.22 1)" font-size="20.1">0</text><text transform="translate(1702.9 825.9) rotate(113.0) scale(1.22 1)" font-size="20.1">0</text><text transform="translate(1696.4 840.4) rotate(115.6) scale(1.22 1)" font-size="20.0">0</text><text transform="translate(1689.3 854.5) rotate(118.1) scale(1.22 1)" font-size="20.0">1</text><text transform="translate(1623.3 942.4) rotate(135.8) scale(1.22 1)" font-size="19.8">1</text><text transform="translate(1611.8 953.1) rotate(138.3) scale(1.22 1)" font-size="19.8">1</text><text transform="translate(1599.9 963.3) rotate(140.8) scale(1.22 1)" font-size="19.8">0</text><text transform="translate(1587.6 972.9) rotate(143.3) scale(1.22 1)" font-size="19.8">0</text><text transform="translate(1574.8 982.0) rotate(145.8) scale(1.22 1)" font-size="19.7">1</text><text transform="translate(1561.7 990.5) rotate(148.3) scale(1.22 1)" font-size="19.7">1</text><text transform="translate(1548.3 998.4) rotate(150.8) scale(1.22 1)" font-size="19.7">0</text><text transform="translate(1534.6 1005.7) rotate(153.3) scale(1.22 1)" font-size="19.7">0</text><text transform="translate(1520.5 1012.4) rotate(155.8) scale(1.22 1)" font-size="19.6">1</text><text transform="translate(1506.2 1018.5) rotate(158.3) scale(1.22 1)" font-size="19.6">0</text><text transform="translate(1491.7 1023.9) rotate(160.8) scale(1.22 1)" font-size="19.6">0</text><text transform="translate(1477.0 1028.7) rotate(163.3) scale(1.22 1)" font-size="19.6">1</text><text transform="translate(1462.1 1032.9) rotate(165.8) scale(1.22 1)" font-size="19.5">0</text><text transform="translate(1447.0 1036.4) rotate(168.2) scale(1.22 1)" font-size="19.5">0</text><text transform="translate(1431.8 1039.2) rotate(170.7) scale(1.22 1)" font-size="19.5">0</text><text transform="translate(1416.6 1041.4) rotate(173.2) scale(1.22 1)" font-size="19.5">0</text><text transform="translate(1188.3 937.4) rotate(240.0) scale(1.22 1)" font-size="18.8">0</text><text transform="translate(1181.4 924.4) rotate(243.9) scale(1.22 1)" font-size="18.7">0</text><text transform="translate(1175.3 911.0) rotate(247.8) scale(1.22 1)" font-size="18.7">0</text><text transform="translate(1170.2 897.3) rotate(251.7) scale(1.22 1)" font-size="18.7">0</text><text transform="translate(1166.1 883.3) rotate(255.6) scale(1.22 1)" font-size="18.6">1</text><text transform="translate(1162.9 869.1) rotate(259.5) scale(1.22 1)" font-size="18.6">0</text><text transform="translate(1160.7 854.7) rotate(263.4) scale(1.22 1)" font-size="18.6">0</text><text transform="translate(1159.5 840.2) rotate(267.3) scale(1.22 1)" font-size="18.5">1</text><text transform="translate(1159.2 830.0) rotate(270.0) scale(1.22 1)" font-size="18.5">1</text><text transform="translate(1160.0 815.8) rotate(276.3) scale(1.22 1)" font-size="18.4">0</text><text transform="translate(194.0 812.6) rotate(284.6) scale(1.22 1)" font-size="22.3">0</text><text transform="translate(198.7 795.4) rotate(285.6) scale(1.22 1)" font-size="22.3">0</text><text transform="translate(203.6 778.3) rotate(286.7) scale(1.22 1)" font-size="22.3">1</text><text transform="translate(220.3 727.6) rotate(289.8) scale(1.22 1)" font-size="22.2">0</text><text transform="translate(226.5 711.0) rotate(290.8) scale(1.22 1)" font-size="22.2">0</text><text transform="translate(261.7 629.6) rotate(296.0) scale(1.22 1)" font-size="22.2">0</text><text transform="translate(332.7 507.4) rotate(304.3) scale(1.22 1)" font-size="22.1">0</text><text transform="translate(432.1 384.1) rotate(313.5) scale(1.22 1)" font-size="22.0">0</text><text transform="translate(444.3 371.5) rotate(314.5) scale(1.22 1)" font-size="22.0">1</text><text transform="translate(469.4 346.9) rotate(316.6) scale(1.22 1)" font-size="22.0">0</text><text transform="translate(482.2 335.0) rotate(317.6) scale(1.22 1)" font-size="21.9">0</text><text transform="translate(495.3 323.3) rotate(318.6) scale(1.22 1)" font-size="21.9">0</text><text transform="translate(522.0 300.6) rotate(320.7) scale(1.22 1)" font-size="21.9">0</text><text transform="translate(563.5 268.4) rotate(323.7) scale(1.22 1)" font-size="21.9">0</text><text transform="translate(577.7 258.2) rotate(324.8) scale(1.22 1)" font-size="21.9">1</text><text transform="translate(592.1 248.2) rotate(325.8) scale(1.22 1)" font-size="21.9">0</text><text transform="translate(792.4 143.5) rotate(339.0) scale(1.22 1)" font-size="21.7">1</text><text transform="translate(941.9 99.5) rotate(348.1) scale(1.22 1)" font-size="21.6">0</text><text transform="translate(958.8 96.1) rotate(349.1) scale(1.22 1)" font-size="21.6">1</text><text transform="translate(1095.6 77.2) rotate(357.2) scale(1.22 1)" font-size="21.5">1</text><text transform="translate(1112.8 76.1) rotate(358.2) scale(1.22 1)" font-size="21.5">0</text><text transform="translate(1627.1 306.2) rotate(411.8) scale(1.22 1)" font-size="20.8">1</text><text transform="translate(1637.1 319.4) rotate(413.4) scale(1.22 1)" font-size="20.8">0</text><text transform="translate(1646.6 332.9) rotate(414.9) scale(1.22 1)" font-size="20.8">1</text><text transform="translate(1655.7 346.8) rotate(416.5) scale(1.22 1)" font-size="20.8">0</text><text transform="translate(1664.4 360.8) rotate(418.0) scale(1.22 1)" font-size="20.7">0</text><text transform="translate(1711.2 855.4) rotate(116.7) scale(1.22 1)" font-size="20.0">0</text><text transform="translate(1703.7 869.4) rotate(119.1) scale(1.22 1)" font-size="20.0">0</text><text transform="translate(1695.8 883.0) rotate(121.5) scale(1.22 1)" font-size="20.0">1</text><text transform="translate(1687.2 896.3) rotate(123.9) scale(1.22 1)" font-size="20.0">1</text><text transform="translate(1678.1 909.3) rotate(126.3) scale(1.22 1)" font-size="19.9">0</text><text transform="translate(1668.5 921.8) rotate(128.7) scale(1.22 1)" font-size="19.9">1</text><text transform="translate(1658.4 933.9) rotate(131.1) scale(1.22 1)" font-size="19.9">0</text><text transform="translate(1647.8 945.5) rotate(133.5) scale(1.22 1)" font-size="19.9">0</text><text transform="translate(1548.3 1020.6) rotate(152.5) scale(1.22 1)" font-size="19.7">0</text><text transform="translate(1534.3 1027.5) rotate(154.8) scale(1.22 1)" font-size="19.6">0</text><text transform="translate(1520.1 1033.8) rotate(157.2) scale(1.22 1)" font-size="19.6">0</text><text transform="translate(1505.7 1039.5) rotate(159.6) scale(1.22 1)" font-size="19.6">0</text><text transform="translate(1491.0 1044.6) rotate(161.9) scale(1.22 1)" font-size="19.6">1</text><text transform="translate(1182.4 962.7) rotate(235.3) scale(1.22 1)" font-size="18.8">0</text><text transform="translate(1167.2 937.5) rotate(242.5) scale(1.22 1)" font-size="18.8">1</text><text transform="translate(1141.1 839.3) rotate(267.7) scale(1.22 1)" font-size="18.5">0</text><text transform="translate(1141.0 830.0) rotate(270.0) scale(1.22 1)" font-size="18.5">0</text><text transform="translate(1141.7 815.7) rotate(275.6) scale(1.22 1)" font-size="18.4">0</text><text transform="translate(1143.7 801.6) rotate(281.1) scale(1.22 1)" font-size="18.4">1</text><text transform="translate(1157.8 761.8) rotate(297.7) scale(1.22 1)" font-size="18.2">0</text><text transform="translate(1164.9 749.7) rotate(303.1) scale(1.22 1)" font-size="18.1">0</text><text transform="translate(1173.1 738.3) rotate(308.6) scale(1.22 1)" font-size="18.0">1</text><text transform="translate(1182.3 727.9) rotate(314.0) scale(1.22 1)" font-size="18.0">0</text><text transform="translate(1192.5 718.3) rotate(319.5) scale(1.22 1)" font-size="17.9">0</text><text transform="translate(163.1 847.1) rotate(282.2) scale(1.22 1)" font-size="22.3">0</text><text transform="translate(175.8 795.2) rotate(285.3) scale(1.22 1)" font-size="22.3">0</text><text transform="translate(203.1 710.6) rotate(290.4) scale(1.22 1)" font-size="22.2">0</text><text transform="translate(223.0 661.2) rotate(293.4) scale(1.22 1)" font-size="22.2">1</text><text transform="translate(237.7 628.9) rotate(295.4) scale(1.22 1)" font-size="22.2">1</text><text transform="translate(245.5 613.0) rotate(296.4) scale(1.22 1)" font-size="22.2">0</text><text transform="translate(562.7 242.3) rotate(324.6) scale(1.22 1)" font-size="21.9">0</text><text transform="translate(1408.4 106.5) rotate(384.5) scale(1.22 1)" font-size="21.2">1</text><text transform="translate(1482.2 146.9) rotate(392.1) scale(1.22 1)" font-size="21.1">0</text><text transform="translate(1496.2 156.1) rotate(393.6) scale(1.22 1)" font-size="21.1">0</text><text transform="translate(1510.0 165.6) rotate(395.1) scale(1.22 1)" font-size="21.0">0</text><text transform="translate(1523.6 175.5) rotate(396.6) scale(1.22 1)" font-size="21.0">0</text><text transform="translate(1536.8 185.7) rotate(398.1) scale(1.22 1)" font-size="21.0">1</text><text transform="translate(1549.8 196.3) rotate(399.6) scale(1.22 1)" font-size="21.0">1</text><text transform="translate(1562.4 207.2) rotate(401.2) scale(1.22 1)" font-size="21.0">1</text><text transform="translate(1574.8 218.5) rotate(402.7) scale(1.22 1)" font-size="20.9">0</text><text transform="translate(128.0 917.3) rotate(278.0) scale(1.22 1)" font-size="22.3">1</text><text transform="translate(133.7 882.0) rotate(280.0) scale(1.22 1)" font-size="22.3">0</text><text transform="translate(140.5 847.0) rotate(282.0) scale(1.22 1)" font-size="22.3">0</text><text transform="translate(144.4 829.6) rotate(283.0) scale(1.22 1)" font-size="22.3">0</text><text transform="translate(173.9 727.0) rotate(288.9) scale(1.22 1)" font-size="22.2">0</text><text transform="translate(452.4 303.4) rotate(317.6) scale(1.22 1)" font-size="21.9">0</text><text transform="translate(465.4 291.7) rotate(318.5) scale(1.22 1)" font-size="21.9">0</text><text transform="translate(519.6 247.2) rotate(322.5) scale(1.22 1)" font-size="21.9">0</text><text transform="translate(576.5 206.6) rotate(326.4) scale(1.22 1)" font-size="21.9">1</text><text transform="translate(591.2 197.0) rotate(327.4) scale(1.22 1)" font-size="21.8">0</text><text transform="translate(910.2 62.6) rotate(346.8) scale(1.22 1)" font-size="21.6">1</text><text transform="translate(927.1 58.8) rotate(347.8) scale(1.22 1)" font-size="21.6">1</text></g>
<g fill="#2aa6dc" fill-opacity="0.5"><text transform="translate(229.0 1042.1) rotate(271.1) scale(1.22 1)" font-size="22.4">0</text><text transform="translate(246.0 882.4) rotate(281.2) scale(1.22 1)" font-size="22.3">0</text><text transform="translate(262.4 813.1) rotate(285.6) scale(1.22 1)" font-size="22.3">0</text><text transform="translate(278.2 762.2) rotate(289.0) scale(1.22 1)" font-size="22.2">0</text><text transform="translate(284.1 745.4) rotate(290.1) scale(1.22 1)" font-size="22.2">1</text><text transform="translate(296.8 712.3) rotate(292.3) scale(1.22 1)" font-size="22.2">1</text><text transform="translate(303.7 695.9) rotate(293.4) scale(1.22 1)" font-size="22.2">0</text><text transform="translate(310.9 679.7) rotate(294.5) scale(1.22 1)" font-size="22.2">0</text><text transform="translate(326.2 647.8) rotate(296.7) scale(1.22 1)" font-size="22.2">0</text><text transform="translate(334.2 632.0) rotate(297.9) scale(1.22 1)" font-size="22.1">0</text><text transform="translate(342.6 616.5) rotate(299.0) scale(1.22 1)" font-size="22.1">0</text><text transform="translate(351.3 601.1) rotate(300.1) scale(1.22 1)" font-size="22.1">0</text><text transform="translate(388.9 541.3) rotate(304.5) scale(1.22 1)" font-size="22.1">0</text><text transform="translate(430.9 484.7) rotate(308.9) scale(1.22 1)" font-size="22.0">1</text><text transform="translate(594.4 326.4) rotate(323.2) scale(1.22 1)" font-size="21.9">1</text><text transform="translate(608.5 316.1) rotate(324.3) scale(1.22 1)" font-size="21.9">0</text><text transform="translate(622.7 306.0) rotate(325.3) scale(1.22 1)" font-size="21.9">1</text><text transform="translate(637.2 296.1) rotate(326.4) scale(1.22 1)" font-size="21.9">0</text><text transform="translate(651.8 286.6) rotate(327.5) scale(1.22 1)" font-size="21.8">1</text><text transform="translate(666.6 277.4) rotate(328.6) scale(1.22 1)" font-size="21.8">0</text><text transform="translate(681.6 268.4) rotate(329.7) scale(1.22 1)" font-size="21.8">0</text><text transform="translate(696.7 259.7) rotate(330.8) scale(1.22 1)" font-size="21.8">0</text><text transform="translate(712.0 251.3) rotate(331.9) scale(1.22 1)" font-size="21.8">1</text><text transform="translate(727.4 243.2) rotate(333.0) scale(1.22 1)" font-size="21.8">0</text><text transform="translate(206.9 1042.1) rotate(271.1) scale(1.22 1)" font-size="22.4">1</text><text transform="translate(207.3 1024.2) rotate(272.2) scale(1.22 1)" font-size="22.4">0</text><text transform="translate(208.2 1006.3) rotate(273.3) scale(1.22 1)" font-size="22.4">1</text><text transform="translate(209.4 988.5) rotate(274.4) scale(1.22 1)" font-size="22.4">0</text><text transform="translate(210.9 970.6) rotate(275.5) scale(1.22 1)" font-size="22.4">0</text><text transform="translate(212.7 952.9) rotate(276.6) scale(1.22 1)" font-size="22.4">0</text><text transform="translate(326.7 600.0) rotate(299.4) scale(1.22 1)" font-size="22.1">0</text><text transform="translate(335.5 584.7) rotate(300.5) scale(1.22 1)" font-size="22.1">0</text><text transform="translate(363.6 539.7) rotate(303.7) scale(1.22 1)" font-size="22.1">1</text><text transform="translate(394.1 496.5) rotate(306.9) scale(1.22 1)" font-size="22.1">0</text><text transform="translate(415.8 468.8) rotate(309.1) scale(1.22 1)" font-size="22.0">1</text><text transform="translate(551.9 332.2) rotate(320.9) scale(1.22 1)" font-size="21.9">0</text><text transform="translate(681.5 243.5) rotate(330.5) scale(1.22 1)" font-size="21.8">0</text><text transform="translate(696.7 235.0) rotate(331.5) scale(1.22 1)" font-size="21.8">0</text><text transform="translate(712.1 226.8) rotate(332.6) scale(1.22 1)" font-size="21.8">0</text><text transform="translate(1144.0 117.5) rotate(360.0) scale(1.22 1)" font-size="21.5">0</text><text transform="translate(1541.7 272.8) rotate(403.9) scale(1.22 1)" font-size="20.9">0</text><text transform="translate(1553.5 284.5) rotate(405.6) scale(1.22 1)" font-size="20.9">0</text><text transform="translate(1564.9 296.6) rotate(407.2) scale(1.22 1)" font-size="20.9">1</text><text transform="translate(1616.3 361.5) rotate(415.5) scale(1.22 1)" font-size="20.8">0</text><text transform="translate(1625.2 375.4) rotate(417.2) scale(1.22 1)" font-size="20.7">0</text><text transform="translate(1656.7 433.3) rotate(423.8) scale(1.22 1)" font-size="20.7">1</text><text transform="translate(1681.3 494.1) rotate(430.3) scale(1.22 1)" font-size="20.6">1</text><text transform="translate(1686.3 509.7) rotate(432.0) scale(1.22 1)" font-size="20.5">0</text><text transform="translate(1690.8 525.4) rotate(433.6) scale(1.22 1)" font-size="20.5">1</text><text transform="translate(1694.9 541.2) rotate(435.3) scale(1.22 1)" font-size="20.5">0</text><text transform="translate(1598.3 938.9) rotate(138.4) scale(1.22 1)" font-size="19.8">0</text><text transform="translate(1574.1 958.6) rotate(143.7) scale(1.22 1)" font-size="19.8">0</text><text transform="translate(1561.3 967.6) rotate(146.4) scale(1.22 1)" font-size="19.7">0</text><text transform="translate(208.3 847.3) rotate(282.8) scale(1.22 1)" font-size="22.3">0</text><text transform="translate(212.4 830.0) rotate(283.9) scale(1.22 1)" font-size="22.3">0</text><text transform="translate(216.8 812.7) rotate(284.9) scale(1.22 1)" font-size="22.3">0</text><text transform="translate(221.5 795.6) rotate(286.0) scale(1.22 1)" font-size="22.3">1</text><text transform="translate(226.6 778.5) rotate(287.1) scale(1.22 1)" font-size="22.3">1</text><text transform="translate(302.2 599.0) rotate(298.7) scale(1.22 1)" font-size="22.1">1</text><text transform="translate(310.8 583.6) rotate(299.8) scale(1.22 1)" font-size="22.1">0</text><text transform="translate(319.8 568.3) rotate(300.8) scale(1.22 1)" font-size="22.1">0</text><text transform="translate(378.9 480.5) rotate(307.1) scale(1.22 1)" font-size="22.0">0</text><text transform="translate(389.6 466.6) rotate(308.2) scale(1.22 1)" font-size="22.0">0</text><text transform="translate(400.6 452.8) rotate(309.2) scale(1.22 1)" font-size="22.0">0</text><text transform="translate(411.9 439.3) rotate(310.3) scale(1.22 1)" font-size="22.0">0</text><text transform="translate(471.7 374.9) rotate(315.5) scale(1.22 1)" font-size="22.0">0</text><text transform="translate(484.3 362.7) rotate(316.6) scale(1.22 1)" font-size="22.0">0</text><text transform="translate(550.6 305.4) rotate(321.8) scale(1.22 1)" font-size="21.9">1</text><text transform="translate(578.5 284.3) rotate(323.9) scale(1.22 1)" font-size="21.9">0</text><text transform="translate(592.7 274.1) rotate(325.0) scale(1.22 1)" font-size="21.9">0</text><text transform="translate(696.9 210.5) rotate(332.2) scale(1.22 1)" font-size="21.8">0</text><text transform="translate(712.4 202.5) rotate(333.3) scale(1.22 1)" font-size="21.8">0</text><text transform="translate(728.0 194.8) rotate(334.3) scale(1.22 1)" font-size="21.8">1</text><text transform="translate(743.7 187.4) rotate(335.4) scale(1.22 1)" font-size="21.8">1</text><text transform="translate(759.6 180.3) rotate(336.4) scale(1.22 1)" font-size="21.8">0</text><text transform="translate(775.6 173.4) rotate(337.4) scale(1.22 1)" font-size="21.7">0</text><text transform="translate(791.7 166.9) rotate(338.5) scale(1.22 1)" font-size="21.7">0</text><text transform="translate(807.9 160.7) rotate(339.5) scale(1.22 1)" font-size="21.7">0</text><text transform="translate(1212.4 97.4) rotate(366.6) scale(1.22 1)" font-size="21.4">0</text><text transform="translate(1229.4 98.9) rotate(368.3) scale(1.22 1)" font-size="21.4">1</text><text transform="translate(1246.3 101.0) rotate(369.9) scale(1.22 1)" font-size="21.4">0</text><text transform="translate(1263.2 103.5) rotate(371.6) scale(1.22 1)" font-size="21.4">1</text><text transform="translate(1451.1 176.7) rotate(391.1) scale(1.22 1)" font-size="21.1">0</text><text transform="translate(1465.4 185.6) rotate(392.7) scale(1.22 1)" font-size="21.1">1</text><text transform="translate(1479.3 195.0) rotate(394.3) scale(1.22 1)" font-size="21.1">0</text><text transform="translate(1493.0 204.7) rotate(395.9) scale(1.22 1)" font-size="21.0">1</text><text transform="translate(1657.3 389.5) rotate(420.0) scale(1.22 1)" font-size="20.7">0</text><text transform="translate(1665.1 404.0) rotate(421.6) scale(1.22 1)" font-size="20.7">1</text><text transform="translate(1672.4 418.8) rotate(423.2) scale(1.22 1)" font-size="20.7">0</text><text transform="translate(1679.4 433.7) rotate(424.8) scale(1.22 1)" font-size="20.6">1</text><text transform="translate(1685.9 448.7) rotate(426.4) scale(1.22 1)" font-size="20.6">0</text><text transform="translate(1692.0 464.0) rotate(427.9) scale(1.22 1)" font-size="20.6">0</text><text transform="translate(1697.7 479.4) rotate(429.5) scale(1.22 1)" font-size="20.6">0</text><text transform="translate(1731.2 686.0) rotate(90.0) scale(1.22 1)" font-size="20.3">0</text><text transform="translate(1730.9 702.0) rotate(92.6) scale(1.22 1)" font-size="20.3">1</text><text transform="translate(1729.9 718.0) rotate(95.1) scale(1.22 1)" font-size="20.3">1</text><text transform="translate(1681.5 868.3) rotate(120.7) scale(1.22 1)" font-size="20.0">1</text><text transform="translate(1673.2 881.7) rotate(123.2) scale(1.22 1)" font-size="20.0">0</text><text transform="translate(1664.3 894.8) rotate(125.7) scale(1.22 1)" font-size="19.9">0</text><text transform="translate(1654.8 907.4) rotate(128.3) scale(1.22 1)" font-size="19.9">1</text><text transform="translate(1644.8 919.5) rotate(130.8) scale(1.22 1)" font-size="19.9">1</text><text transform="translate(1314.3 1035.6) rotate(196.2) scale(1.22 1)" font-size="19.2">0</text><text transform="translate(178.6 882.2) rotate(280.4) scale(1.22 1)" font-size="22.3">1</text><text transform="translate(189.7 829.8) rotate(283.6) scale(1.22 1)" font-size="22.3">0</text><text transform="translate(295.0 567.2) rotate(300.1) scale(1.22 1)" font-size="22.1">0</text><text transform="translate(342.7 492.9) rotate(305.3) scale(1.22 1)" font-size="22.1">0</text><text transform="translate(353.1 478.6) rotate(306.3) scale(1.22 1)" font-size="22.1">1</text><text transform="translate(363.6 464.5) rotate(307.3) scale(1.22 1)" font-size="22.0">0</text><text transform="translate(408.3 410.1) rotate(311.5) scale(1.22 1)" font-size="22.0">0</text><text transform="translate(874.7 116.1) rotate(344.1) scale(1.22 1)" font-size="21.7">0</text><text transform="translate(891.4 111.5) rotate(345.1) scale(1.22 1)" font-size="21.7">0</text><text transform="translate(908.2 107.2) rotate(346.1) scale(1.22 1)" font-size="21.7">0</text><text transform="translate(925.0 103.2) rotate(347.1) scale(1.22 1)" font-size="21.6">1</text><text transform="translate(975.9 92.9) rotate(350.1) scale(1.22 1)" font-size="21.6">1</text><text transform="translate(1061.2 80.3) rotate(355.2) scale(1.22 1)" font-size="21.6">0</text><text transform="translate(1078.4 78.6) rotate(356.2) scale(1.22 1)" font-size="21.6">0</text><text transform="translate(1521.6 200.2) rotate(397.9) scale(1.22 1)" font-size="21.0">0</text><text transform="translate(1534.6 210.7) rotate(399.4) scale(1.22 1)" font-size="21.0">1</text><text transform="translate(1547.3 221.6) rotate(401.0) scale(1.22 1)" font-size="21.0">0</text><text transform="translate(1559.7 232.7) rotate(402.5) scale(1.22 1)" font-size="20.9">0</text><text transform="translate(1571.8 244.2) rotate(404.1) scale(1.22 1)" font-size="20.9">0</text><text transform="translate(1583.5 256.0) rotate(405.6) scale(1.22 1)" font-size="20.9">0</text><text transform="translate(1595.0 268.1) rotate(407.2) scale(1.22 1)" font-size="20.9">1</text><text transform="translate(1606.0 280.5) rotate(408.7) scale(1.22 1)" font-size="20.9">1</text><text transform="translate(1616.8 293.2) rotate(410.3) scale(1.22 1)" font-size="20.8">0</text><text transform="translate(1672.7 375.1) rotate(419.5) scale(1.22 1)" font-size="20.7">0</text><text transform="translate(1680.6 389.6) rotate(421.1) scale(1.22 1)" font-size="20.7">0</text><text transform="translate(1688.1 404.2) rotate(422.6) scale(1.22 1)" font-size="20.7">0</text><text transform="translate(1695.2 419.1) rotate(424.2) scale(1.22 1)" font-size="20.7">0</text><text transform="translate(1701.9 434.1) rotate(425.7) scale(1.22 1)" font-size="20.6">0</text><text transform="translate(1708.2 449.3) rotate(427.2) scale(1.22 1)" font-size="20.6">0</text><text transform="translate(1714.0 464.6) rotate(428.8) scale(1.22 1)" font-size="20.6">0</text><text transform="translate(1719.5 480.1) rotate(430.3) scale(1.22 1)" font-size="20.6">0</text><text transform="translate(1636.8 956.7) rotate(135.8) scale(1.22 1)" font-size="19.8">0</text><text transform="translate(1625.3 967.4) rotate(138.2) scale(1.22 1)" font-size="19.8">1</text><text transform="translate(1613.4 977.6) rotate(140.6) scale(1.22 1)" font-size="19.8">0</text><text transform="translate(1601.1 987.3) rotate(143.0) scale(1.22 1)" font-size="19.8">0</text><text transform="translate(1588.4 996.4) rotate(145.4) scale(1.22 1)" font-size="19.7">0</text><text transform="translate(1575.3 1005.0) rotate(147.7) scale(1.22 1)" font-size="19.7">0</text><text transform="translate(1562.0 1013.1) rotate(150.1) scale(1.22 1)" font-size="19.7">0</text><text transform="translate(1271.8 1039.6) rotate(206.0) scale(1.22 1)" font-size="19.1">0</text><text transform="translate(1258.6 1032.6) rotate(209.7) scale(1.22 1)" font-size="19.1">1</text><text transform="translate(1245.8 1024.7) rotate(213.4) scale(1.22 1)" font-size="19.1">1</text><text transform="translate(1233.6 1016.1) rotate(217.0) scale(1.22 1)" font-size="19.0">0</text><text transform="translate(1222.0 1006.8) rotate(220.7) scale(1.22 1)" font-size="19.0">0</text><text transform="translate(1211.0 996.7) rotate(224.4) scale(1.22 1)" font-size="18.9">0</text><text transform="translate(1174.4 950.3) rotate(238.9) scale(1.22 1)" font-size="18.8">1</text><text transform="translate(1160.8 924.2) rotate(246.2) scale(1.22 1)" font-size="18.7">0</text><text transform="translate(1155.3 910.6) rotate(249.8) scale(1.22 1)" font-size="18.7">0</text><text transform="translate(1150.7 896.7) rotate(253.4) scale(1.22 1)" font-size="18.7">1</text><text transform="translate(1146.9 882.5) rotate(257.0) scale(1.22 1)" font-size="18.6">0</text><text transform="translate(1144.1 868.2) rotate(260.6) scale(1.22 1)" font-size="18.6">1</text><text transform="translate(1142.2 853.8) rotate(264.1) scale(1.22 1)" font-size="18.5">0</text><text transform="translate(1151.9 774.5) rotate(292.2) scale(1.22 1)" font-size="18.2">1</text><text transform="translate(1203.4 709.8) rotate(324.9) scale(1.22 1)" font-size="17.8">0</text><text transform="translate(1215.1 702.4) rotate(330.2) scale(1.22 1)" font-size="17.8">0</text><text transform="translate(1227.3 696.2) rotate(335.6) scale(1.22 1)" font-size="17.7">1</text><text transform="translate(1240.1 691.1) rotate(341.0) scale(1.22 1)" font-size="17.6">0</text><text transform="translate(1253.2 687.3) rotate(346.3) scale(1.22 1)" font-size="17.6">0</text><text transform="translate(1266.5 684.7) rotate(351.6) scale(1.22 1)" font-size="17.5">1</text><text transform="translate(1280.0 683.3) rotate(356.9) scale(1.22 1)" font-size="17.5">1</text><text transform="translate(1288.0 683.1) rotate(360.0) scale(1.22 1)" font-size="17.4">1</text><text transform="translate(1301.1 684.1) rotate(368.5) scale(1.22 1)" font-size="17.4">0</text><text transform="translate(1313.9 687.0) rotate(377.0) scale(1.22 1)" font-size="17.3">1</text><text transform="translate(1326.1 691.8) rotate(385.4) scale(1.22 1)" font-size="17.3">0</text><text transform="translate(1337.5 698.2) rotate(393.9) scale(1.22 1)" font-size="17.2">0</text><text transform="translate(1347.7 706.3) rotate(402.3) scale(1.22 1)" font-size="17.2">1</text><text transform="translate(145.9 952.8) rotate(276.1) scale(1.22 1)" font-size="22.4">0</text><text transform="translate(148.0 935.0) rotate(277.2) scale(1.22 1)" font-size="22.4">0</text><text transform="translate(153.1 899.7) rotate(279.2) scale(1.22 1)" font-size="22.3">1</text><text transform="translate(167.0 829.7) rotate(283.3) scale(1.22 1)" font-size="22.3">0</text><text transform="translate(171.3 812.4) rotate(284.3) scale(1.22 1)" font-size="22.3">1</text><text transform="translate(180.7 778.1) rotate(286.3) scale(1.22 1)" font-size="22.3">1</text><text transform="translate(185.9 761.0) rotate(287.3) scale(1.22 1)" font-size="22.2">0</text><text transform="translate(230.2 645.0) rotate(294.4) scale(1.22 1)" font-size="22.2">0</text><text transform="translate(253.5 597.2) rotate(297.5) scale(1.22 1)" font-size="22.1">0</text><text transform="translate(261.8 581.6) rotate(298.5) scale(1.22 1)" font-size="22.1">0</text><text transform="translate(270.4 566.1) rotate(299.5) scale(1.22 1)" font-size="22.1">1</text><text transform="translate(279.2 550.8) rotate(300.5) scale(1.22 1)" font-size="22.1">0</text><text transform="translate(288.4 535.6) rotate(301.5) scale(1.22 1)" font-size="22.1">0</text><text transform="translate(297.7 520.7) rotate(302.5) scale(1.22 1)" font-size="22.1">0</text><text transform="translate(317.3 491.2) rotate(304.5) scale(1.22 1)" font-size="22.1">0</text><text transform="translate(327.4 476.8) rotate(305.5) scale(1.22 1)" font-size="22.1">0</text><text transform="translate(337.8 462.5) rotate(306.5) scale(1.22 1)" font-size="22.1">1</text><text transform="translate(548.6 252.5) rotate(323.6) scale(1.22 1)" font-size="21.9">0</text><text transform="translate(591.6 222.5) rotate(326.6) scale(1.22 1)" font-size="21.9">0</text><text transform="translate(606.3 213.1) rotate(327.6) scale(1.22 1)" font-size="21.8">1</text><text transform="translate(621.1 203.8) rotate(328.6) scale(1.22 1)" font-size="21.8">1</text><text transform="translate(636.1 194.9) rotate(329.6) scale(1.22 1)" font-size="21.8">0</text><text transform="translate(651.2 186.2) rotate(330.6) scale(1.22 1)" font-size="21.8">0</text><text transform="translate(666.5 177.8) rotate(331.6) scale(1.22 1)" font-size="21.8">1</text><text transform="translate(744.8 139.7) rotate(336.5) scale(1.22 1)" font-size="21.8">1</text><text transform="translate(760.8 133.0) rotate(337.5) scale(1.22 1)" font-size="21.7">1</text><text transform="translate(776.9 126.5) rotate(338.5) scale(1.22 1)" font-size="21.7">1</text><text transform="translate(793.1 120.3) rotate(339.5) scale(1.22 1)" font-size="21.7">0</text><text transform="translate(825.9 108.7) rotate(341.5) scale(1.22 1)" font-size="21.7">0</text><text transform="translate(842.4 103.4) rotate(342.5) scale(1.22 1)" font-size="21.7">0</text><text transform="translate(859.0 98.3) rotate(343.5) scale(1.22 1)" font-size="21.7">0</text><text transform="translate(875.6 93.5) rotate(344.5) scale(1.22 1)" font-size="21.7">0</text><text transform="translate(892.4 89.1) rotate(345.5) scale(1.22 1)" font-size="21.7">0</text><text transform="translate(909.2 84.9) rotate(346.5) scale(1.22 1)" font-size="21.7">0</text><text transform="translate(926.0 81.0) rotate(347.4) scale(1.22 1)" font-size="21.6">0</text><text transform="translate(943.0 77.4) rotate(348.4) scale(1.22 1)" font-size="21.6">1</text><text transform="translate(959.9 74.1) rotate(349.4) scale(1.22 1)" font-size="21.6">0</text><text transform="translate(977.0 71.0) rotate(350.4) scale(1.22 1)" font-size="21.6">1</text><text transform="translate(994.0 68.2) rotate(351.4) scale(1.22 1)" font-size="21.6">0</text><text transform="translate(1011.0 65.4) rotate(352.4) scale(1.22 1)" font-size="21.6">1</text><text transform="translate(1028.1 62.8) rotate(353.4) scale(1.22 1)" font-size="21.6">0</text><text transform="translate(1280.1 63.5) rotate(372.3) scale(1.22 1)" font-size="21.3">0</text><text transform="translate(1296.8 67.0) rotate(373.9) scale(1.22 1)" font-size="21.3">1</text><text transform="translate(1313.2 71.3) rotate(375.4) scale(1.22 1)" font-size="21.3">1</text><text transform="translate(1329.5 76.2) rotate(376.9) scale(1.22 1)" font-size="21.3">0</text><text transform="translate(1345.6 81.4) rotate(378.4) scale(1.22 1)" font-size="21.3">0</text><text transform="translate(1361.5 87.1) rotate(380.0) scale(1.22 1)" font-size="21.2">1</text><text transform="translate(1377.3 93.1) rotate(381.5) scale(1.22 1)" font-size="21.2">0</text><text transform="translate(1392.9 99.6) rotate(383.0) scale(1.22 1)" font-size="21.2">0</text><text transform="translate(1586.8 230.0) rotate(404.2) scale(1.22 1)" font-size="20.9">1</text><text transform="translate(1598.6 241.8) rotate(405.7) scale(1.22 1)" font-size="20.9">0</text><text transform="translate(1610.0 253.9) rotate(407.2) scale(1.22 1)" font-size="20.9">0</text><text transform="translate(1621.0 266.3) rotate(408.7) scale(1.22 1)" font-size="20.9">1</text><text transform="translate(1631.8 279.0) rotate(410.2) scale(1.22 1)" font-size="20.8">0</text><text transform="translate(1642.2 292.0) rotate(411.7) scale(1.22 1)" font-size="20.8">1</text><text transform="translate(1652.2 305.2) rotate(413.2) scale(1.22 1)" font-size="20.8">1</text><text transform="translate(1661.8 318.7) rotate(414.6) scale(1.22 1)" font-size="20.8">1</text><text transform="translate(1671.0 332.5) rotate(416.1) scale(1.22 1)" font-size="20.8">0</text><text transform="translate(1679.7 346.5) rotate(417.6) scale(1.22 1)" font-size="20.7">1</text><text transform="translate(1768.1 608.4) rotate(442.9) scale(1.22 1)" font-size="20.4">0</text><text transform="translate(1745.4 826.9) rotate(110.8) scale(1.22 1)" font-size="20.1">1</text><text transform="translate(1739.4 841.6) rotate(113.1) scale(1.22 1)" font-size="20.1">0</text><text transform="translate(1732.9 856.1) rotate(115.4) scale(1.22 1)" font-size="20.0">0</text><text transform="translate(1725.8 870.3) rotate(117.6) scale(1.22 1)" font-size="20.0">1</text><text transform="translate(1718.1 884.2) rotate(119.9) scale(1.22 1)" font-size="20.0">1</text><text transform="translate(1709.9 897.7) rotate(122.2) scale(1.22 1)" font-size="20.0">1</text><text transform="translate(1682.2 936.2) rotate(129.1) scale(1.22 1)" font-size="19.9">1</text><text transform="translate(1672.0 948.2) rotate(131.3) scale(1.22 1)" font-size="19.9">1</text><text transform="translate(1661.4 959.8) rotate(133.6) scale(1.22 1)" font-size="19.9">1</text><text transform="translate(1650.3 971.0) rotate(135.9) scale(1.22 1)" font-size="19.8">0</text><text transform="translate(1638.8 981.7) rotate(138.2) scale(1.22 1)" font-size="19.8">0</text><text transform="translate(1626.9 991.9) rotate(140.4) scale(1.22 1)" font-size="19.8">0</text><text transform="translate(1614.6 1001.6) rotate(142.7) scale(1.22 1)" font-size="19.8">0</text><text transform="translate(1601.9 1010.8) rotate(144.9) scale(1.22 1)" font-size="19.7">1</text><text transform="translate(1588.9 1019.5) rotate(147.2) scale(1.22 1)" font-size="19.7">0</text><text transform="translate(1575.6 1027.7) rotate(149.5) scale(1.22 1)" font-size="19.7">1</text><text transform="translate(1562.0 1035.4) rotate(151.7) scale(1.22 1)" font-size="19.7">0</text><text transform="translate(1548.1 1042.5) rotate(154.0) scale(1.22 1)" font-size="19.7">1</text><text transform="translate(121.9 970.6) rotate(275.0) scale(1.22 1)" font-size="22.4">0</text><text transform="translate(123.6 952.8) rotate(276.0) scale(1.22 1)" font-size="22.4">1</text><text transform="translate(125.7 935.0) rotate(277.0) scale(1.22 1)" font-size="22.4">0</text><text transform="translate(130.7 899.6) rotate(279.0) scale(1.22 1)" font-size="22.3">0</text><text transform="translate(136.9 864.5) rotate(281.0) scale(1.22 1)" font-size="22.3">1</text><text transform="translate(148.6 812.3) rotate(284.0) scale(1.22 1)" font-size="22.3">0</text><text transform="translate(157.8 777.9) rotate(286.0) scale(1.22 1)" font-size="22.3">0</text><text transform="translate(162.9 760.8) rotate(287.0) scale(1.22 1)" font-size="22.3">0</text><text transform="translate(168.2 743.8) rotate(288.0) scale(1.22 1)" font-size="22.2">0</text><text transform="translate(179.8 710.2) rotate(289.9) scale(1.22 1)" font-size="22.2">0</text><text transform="translate(291.9 489.7) rotate(303.8) scale(1.22 1)" font-size="22.1">0</text><text transform="translate(322.5 446.5) rotate(306.8) scale(1.22 1)" font-size="22.1">0</text><text transform="translate(390.1 365.3) rotate(312.7) scale(1.22 1)" font-size="22.0">0</text><text transform="translate(402.1 352.5) rotate(313.6) scale(1.22 1)" font-size="22.0">1</text><text transform="translate(414.4 339.9) rotate(314.6) scale(1.22 1)" font-size="22.0">0</text><text transform="translate(426.8 327.5) rotate(315.6) scale(1.22 1)" font-size="22.0">1</text><text transform="translate(439.5 315.3) rotate(316.6) scale(1.22 1)" font-size="22.0">0</text><text transform="translate(478.7 280.2) rotate(319.5) scale(1.22 1)" font-size="21.9">1</text><text transform="translate(492.2 269.0) rotate(320.5) scale(1.22 1)" font-size="21.9">0</text><text transform="translate(505.8 258.0) rotate(321.5) scale(1.22 1)" font-size="21.9">1</text><text transform="translate(533.6 236.7) rotate(323.4) scale(1.22 1)" font-size="21.9">1</text><text transform="translate(547.7 226.4) rotate(324.4) scale(1.22 1)" font-size="21.9">0</text><text transform="translate(562.1 216.3) rotate(325.4) scale(1.22 1)" font-size="21.9">0</text><text transform="translate(620.9 178.7) rotate(329.3) scale(1.22 1)" font-size="21.8">1</text><text transform="translate(636.0 170.0) rotate(330.3) scale(1.22 1)" font-size="21.8">0</text><text transform="translate(651.3 161.5) rotate(331.3) scale(1.22 1)" font-size="21.8">1</text><text transform="translate(666.6 153.2) rotate(332.2) scale(1.22 1)" font-size="21.8">0</text><text transform="translate(682.1 145.3) rotate(333.2) scale(1.22 1)" font-size="21.8">1</text><text transform="translate(697.7 137.6) rotate(334.2) scale(1.22 1)" font-size="21.8">1</text><text transform="translate(713.5 130.1) rotate(335.2) scale(1.22 1)" font-size="21.8">1</text><text transform="translate(729.4 123.0) rotate(336.1) scale(1.22 1)" font-size="21.8">1</text><text transform="translate(745.3 116.1) rotate(337.1) scale(1.22 1)" font-size="21.7">1</text><text transform="translate(761.4 109.5) rotate(338.1) scale(1.22 1)" font-size="21.7">1</text><text transform="translate(777.6 103.1) rotate(339.0) scale(1.22 1)" font-size="21.7">0</text><text transform="translate(793.9 97.1) rotate(340.0) scale(1.22 1)" font-size="21.7">0</text><text transform="translate(810.3 91.3) rotate(341.0) scale(1.22 1)" font-size="21.7">0</text><text transform="translate(826.7 85.8) rotate(342.0) scale(1.22 1)" font-size="21.7">0</text><text transform="translate(843.3 80.6) rotate(342.9) scale(1.22 1)" font-size="21.7">1</text><text transform="translate(859.9 75.7) rotate(343.9) scale(1.22 1)" font-size="21.7">0</text><text transform="translate(876.6 71.0) rotate(344.9) scale(1.22 1)" font-size="21.7">1</text><text transform="translate(893.4 66.7) rotate(345.8) scale(1.22 1)" font-size="21.7">0</text><text transform="translate(944.0 55.3) rotate(348.7) scale(1.22 1)" font-size="21.6">1</text><text transform="translate(961.0 52.1) rotate(349.7) scale(1.22 1)" font-size="21.6">0</text><text transform="translate(978.1 49.2) rotate(350.7) scale(1.22 1)" font-size="21.6">1</text><text transform="translate(995.1 46.3) rotate(351.6) scale(1.22 1)" font-size="21.6">0</text><text transform="translate(1012.2 43.6) rotate(352.6) scale(1.22 1)" font-size="21.6">0</text><text transform="translate(1029.3 41.1) rotate(353.6) scale(1.22 1)" font-size="21.6">0</text><text transform="translate(1046.4 39.0) rotate(354.5) scale(1.22 1)" font-size="21.6">0</text><text transform="translate(1063.5 37.1) rotate(355.5) scale(1.22 1)" font-size="21.6">0</text><text transform="translate(1080.7 35.5) rotate(356.5) scale(1.22 1)" font-size="21.6">0</text><text transform="translate(1097.9 34.3) rotate(357.4) scale(1.22 1)" font-size="21.5">0</text><text transform="translate(1132.3 32.6) rotate(359.3) scale(1.22 1)" font-size="21.5">0</text><text transform="translate(1144.0 32.2) rotate(360.0) scale(1.22 1)" font-size="21.5">1</text><text transform="translate(1161.2 31.9) rotate(361.5) scale(1.22 1)" font-size="21.5">0</text></g>
<g fill="#2c90dc" fill-opacity="0.24"><text transform="translate(235.0 952.9) rotate(276.7) scale(1.22 1)" font-size="22.4">0</text><text transform="translate(237.2 935.2) rotate(277.8) scale(1.22 1)" font-size="22.3">0</text><text transform="translate(239.8 917.5) rotate(279.0) scale(1.22 1)" font-size="22.3">0</text><text transform="translate(242.7 899.9) rotate(280.1) scale(1.22 1)" font-size="22.3">0</text><text transform="translate(249.6 864.9) rotate(282.3) scale(1.22 1)" font-size="22.3">0</text><text transform="translate(253.5 847.6) rotate(283.4) scale(1.22 1)" font-size="22.3">1</text><text transform="translate(257.8 830.3) rotate(284.5) scale(1.22 1)" font-size="22.3">0</text><text transform="translate(267.3 796.0) rotate(286.8) scale(1.22 1)" font-size="22.3">1</text><text transform="translate(272.6 779.0) rotate(287.9) scale(1.22 1)" font-size="22.2">1</text><text transform="translate(360.3 585.8) rotate(301.2) scale(1.22 1)" font-size="22.1">0</text><text transform="translate(369.6 570.8) rotate(302.3) scale(1.22 1)" font-size="22.1">1</text><text transform="translate(379.1 556.0) rotate(303.4) scale(1.22 1)" font-size="22.1">1</text><text transform="translate(399.0 526.8) rotate(305.6) scale(1.22 1)" font-size="22.1">0</text><text transform="translate(442.1 471.1) rotate(310.0) scale(1.22 1)" font-size="22.0">1</text><text transform="translate(580.5 337.1) rotate(322.1) scale(1.22 1)" font-size="21.9">1</text><text transform="translate(742.9 235.4) rotate(334.1) scale(1.22 1)" font-size="21.8">0</text><text transform="translate(758.6 228.0) rotate(335.1) scale(1.22 1)" font-size="21.8">1</text><text transform="translate(774.5 220.8) rotate(336.2) scale(1.22 1)" font-size="21.8">0</text><text transform="translate(1143.7 138.8) rotate(360.0) scale(1.22 1)" font-size="21.5">0</text><text transform="translate(1144.0 138.8) rotate(360.0) scale(1.22 1)" font-size="21.5">1</text><text transform="translate(214.9 935.1) rotate(277.7) scale(1.22 1)" font-size="22.3">1</text><text transform="translate(217.4 917.5) rotate(278.7) scale(1.22 1)" font-size="22.3">1</text><text transform="translate(227.0 864.8) rotate(282.0) scale(1.22 1)" font-size="22.3">0</text><text transform="translate(230.9 847.4) rotate(283.1) scale(1.22 1)" font-size="22.3">1</text><text transform="translate(235.1 830.1) rotate(284.2) scale(1.22 1)" font-size="22.3">0</text><text transform="translate(239.6 812.9) rotate(285.3) scale(1.22 1)" font-size="22.3">0</text><text transform="translate(244.4 795.8) rotate(286.4) scale(1.22 1)" font-size="22.3">0</text><text transform="translate(249.6 778.8) rotate(287.5) scale(1.22 1)" font-size="22.2">0</text><text transform="translate(255.0 761.9) rotate(288.5) scale(1.22 1)" font-size="22.2">1</text><text transform="translate(260.8 745.1) rotate(289.6) scale(1.22 1)" font-size="22.2">1</text><text transform="translate(266.9 728.4) rotate(290.7) scale(1.22 1)" font-size="22.2">1</text><text transform="translate(273.3 711.8) rotate(291.8) scale(1.22 1)" font-size="22.2">0</text><text transform="translate(280.1 695.4) rotate(292.9) scale(1.22 1)" font-size="22.2">0</text><text transform="translate(287.1 679.1) rotate(294.0) scale(1.22 1)" font-size="22.2">1</text><text transform="translate(294.4 663.0) rotate(295.0) scale(1.22 1)" font-size="22.2">1</text><text transform="translate(302.1 647.0) rotate(296.1) scale(1.22 1)" font-size="22.2">0</text><text transform="translate(310.0 631.2) rotate(297.2) scale(1.22 1)" font-size="22.1">0</text><text transform="translate(318.2 615.5) rotate(298.3) scale(1.22 1)" font-size="22.1">0</text><text transform="translate(344.6 569.5) rotate(301.5) scale(1.22 1)" font-size="22.1">0</text><text transform="translate(354.0 554.5) rotate(302.6) scale(1.22 1)" font-size="22.1">0</text><text transform="translate(373.5 525.1) rotate(304.8) scale(1.22 1)" font-size="22.1">0</text><text transform="translate(383.7 510.7) rotate(305.8) scale(1.22 1)" font-size="22.1">1</text><text transform="translate(404.8 482.5) rotate(308.0) scale(1.22 1)" font-size="22.0">0</text><text transform="translate(427.0 455.2) rotate(310.1) scale(1.22 1)" font-size="22.0">0</text><text transform="translate(438.4 441.8) rotate(311.2) scale(1.22 1)" font-size="22.0">0</text><text transform="translate(450.1 428.7) rotate(312.3) scale(1.22 1)" font-size="22.0">0</text><text transform="translate(462.1 415.8) rotate(313.4) scale(1.22 1)" font-size="22.0">1</text><text transform="translate(474.2 403.1) rotate(314.4) scale(1.22 1)" font-size="22.0">0</text><text transform="translate(486.6 390.7) rotate(315.5) scale(1.22 1)" font-size="22.0">0</text><text transform="translate(499.3 378.5) rotate(316.6) scale(1.22 1)" font-size="22.0">1</text><text transform="translate(512.1 366.5) rotate(317.7) scale(1.22 1)" font-size="21.9">0</text><text transform="translate(525.2 354.8) rotate(318.7) scale(1.22 1)" font-size="21.9">0</text><text transform="translate(538.4 343.4) rotate(319.8) scale(1.22 1)" font-size="21.9">0</text><text transform="translate(565.6 321.3) rotate(321.9) scale(1.22 1)" font-size="21.9">0</text><text transform="translate(579.4 310.6) rotate(323.0) scale(1.22 1)" font-size="21.9">0</text><text transform="translate(593.5 300.2) rotate(324.1) scale(1.22 1)" font-size="21.9">0</text><text transform="translate(607.7 290.0) rotate(325.1) scale(1.22 1)" font-size="21.9">0</text><text transform="translate(622.1 280.2) rotate(326.2) scale(1.22 1)" font-size="21.9">0</text><text transform="translate(636.7 270.6) rotate(327.3) scale(1.22 1)" font-size="21.8">1</text><text transform="translate(651.5 261.3) rotate(328.3) scale(1.22 1)" font-size="21.8">0</text><text transform="translate(666.4 252.2) rotate(329.4) scale(1.22 1)" font-size="21.8">0</text><text transform="translate(1161.1 117.0) rotate(361.7) scale(1.22 1)" font-size="21.5">1</text><text transform="translate(1178.2 117.0) rotate(363.4) scale(1.22 1)" font-size="21.5">0</text><text transform="translate(1296.3 132.3) rotate(375.4) scale(1.22 1)" font-size="21.3">0</text><text transform="translate(1312.5 137.1) rotate(377.1) scale(1.22 1)" font-size="21.3">1</text><text transform="translate(1328.6 142.3) rotate(378.8) scale(1.22 1)" font-size="21.3">1</text><text transform="translate(1344.5 148.1) rotate(380.4) scale(1.22 1)" font-size="21.2">0</text><text transform="translate(1360.3 154.2) rotate(382.1) scale(1.22 1)" font-size="21.2">0</text><text transform="translate(1375.8 160.9) rotate(383.8) scale(1.22 1)" font-size="21.2">0</text><text transform="translate(1517.1 250.3) rotate(400.6) scale(1.22 1)" font-size="21.0">0</text><text transform="translate(1650.4 880.2) rotate(125.1) scale(1.22 1)" font-size="19.9">1</text><text transform="translate(1641.0 892.9) rotate(127.8) scale(1.22 1)" font-size="19.9">0</text><text transform="translate(184.7 1042.1) rotate(271.1) scale(1.22 1)" font-size="22.4">0</text><text transform="translate(185.2 1024.2) rotate(272.1) scale(1.22 1)" font-size="22.4">0</text><text transform="translate(231.9 761.6) rotate(288.1) scale(1.22 1)" font-size="22.2">1</text><text transform="translate(237.6 744.7) rotate(289.2) scale(1.22 1)" font-size="22.2">1</text><text transform="translate(243.6 728.0) rotate(290.2) scale(1.22 1)" font-size="22.2">0</text><text transform="translate(249.9 711.4) rotate(291.3) scale(1.22 1)" font-size="22.2">0</text><text transform="translate(256.5 694.9) rotate(292.4) scale(1.22 1)" font-size="22.2">0</text><text transform="translate(263.4 678.6) rotate(293.4) scale(1.22 1)" font-size="22.2">0</text><text transform="translate(270.5 662.4) rotate(294.5) scale(1.22 1)" font-size="22.2">0</text><text transform="translate(278.0 646.3) rotate(295.5) scale(1.22 1)" font-size="22.2">0</text><text transform="translate(285.8 630.4) rotate(296.6) scale(1.22 1)" font-size="22.2">0</text><text transform="translate(293.9 614.6) rotate(297.6) scale(1.22 1)" font-size="22.1">0</text><text transform="translate(338.4 538.3) rotate(302.9) scale(1.22 1)" font-size="22.1">0</text><text transform="translate(348.1 523.6) rotate(304.0) scale(1.22 1)" font-size="22.1">0</text><text transform="translate(358.1 509.0) rotate(305.0) scale(1.22 1)" font-size="22.1">1</text><text transform="translate(368.4 494.7) rotate(306.1) scale(1.22 1)" font-size="22.1">1</text><text transform="translate(423.4 425.9) rotate(311.3) scale(1.22 1)" font-size="22.0">0</text><text transform="translate(435.1 412.8) rotate(312.4) scale(1.22 1)" font-size="22.0">0</text><text transform="translate(447.1 400.0) rotate(313.4) scale(1.22 1)" font-size="22.0">0</text><text transform="translate(459.3 387.3) rotate(314.5) scale(1.22 1)" font-size="22.0">0</text><text transform="translate(497.2 350.8) rotate(317.6) scale(1.22 1)" font-size="21.9">1</text><text transform="translate(510.2 339.1) rotate(318.7) scale(1.22 1)" font-size="21.9">0</text><text transform="translate(523.5 327.6) rotate(319.7) scale(1.22 1)" font-size="21.9">0</text><text transform="translate(537.0 316.4) rotate(320.8) scale(1.22 1)" font-size="21.9">0</text><text transform="translate(1401.3 1042.9) rotate(175.6) scale(1.22 1)" font-size="19.4">0</text><text transform="translate(1385.9 1043.8) rotate(178.1) scale(1.22 1)" font-size="19.4">1</text><text transform="translate(1374.0 1044.0) rotate(180.0) scale(1.22 1)" font-size="19.4">0</text><text transform="translate(162.5 1042.1) rotate(271.0) scale(1.22 1)" font-size="22.4">0</text><text transform="translate(163.0 1024.2) rotate(272.1) scale(1.22 1)" font-size="22.4">0</text><text transform="translate(163.8 1006.3) rotate(273.1) scale(1.22 1)" font-size="22.4">0</text><text transform="translate(164.9 988.4) rotate(274.2) scale(1.22 1)" font-size="22.4">0</text><text transform="translate(166.4 970.6) rotate(275.2) scale(1.22 1)" font-size="22.4">0</text><text transform="translate(168.2 952.8) rotate(276.3) scale(1.22 1)" font-size="22.4">1</text><text transform="translate(170.3 935.1) rotate(277.3) scale(1.22 1)" font-size="22.4">1</text><text transform="translate(172.7 917.4) rotate(278.4) scale(1.22 1)" font-size="22.3">1</text><text transform="translate(175.5 899.7) rotate(279.4) scale(1.22 1)" font-size="22.3">1</text><text transform="translate(182.0 864.6) rotate(281.5) scale(1.22 1)" font-size="22.3">0</text><text transform="translate(185.7 847.2) rotate(282.5) scale(1.22 1)" font-size="22.3">1</text><text transform="translate(208.9 761.3) rotate(287.7) scale(1.22 1)" font-size="22.2">1</text><text transform="translate(214.4 744.4) rotate(288.8) scale(1.22 1)" font-size="22.2">1</text><text transform="translate(239.7 678.0) rotate(292.9) scale(1.22 1)" font-size="22.2">0</text><text transform="translate(246.7 661.8) rotate(293.9) scale(1.22 1)" font-size="22.2">1</text><text transform="translate(254.1 645.6) rotate(295.0) scale(1.22 1)" font-size="22.2">0</text><text transform="translate(269.6 613.8) rotate(297.0) scale(1.22 1)" font-size="22.2">0</text><text transform="translate(277.8 598.1) rotate(298.1) scale(1.22 1)" font-size="22.1">0</text><text transform="translate(286.3 582.5) rotate(299.1) scale(1.22 1)" font-size="22.1">0</text><text transform="translate(304.0 552.0) rotate(301.2) scale(1.22 1)" font-size="22.1">0</text><text transform="translate(313.3 536.9) rotate(302.2) scale(1.22 1)" font-size="22.1">0</text><text transform="translate(322.9 522.1) rotate(303.2) scale(1.22 1)" font-size="22.1">0</text><text transform="translate(374.5 450.6) rotate(308.4) scale(1.22 1)" font-size="22.0">0</text><text transform="translate(385.5 436.9) rotate(309.4) scale(1.22 1)" font-size="22.0">0</text><text transform="translate(396.8 423.4) rotate(310.4) scale(1.22 1)" font-size="22.0">1</text><text transform="translate(535.7 289.6) rotate(321.7) scale(1.22 1)" font-size="21.9">0</text><text transform="translate(549.5 278.9) rotate(322.7) scale(1.22 1)" font-size="21.9">0</text><text transform="translate(606.6 238.5) rotate(326.8) scale(1.22 1)" font-size="21.9">0</text><text transform="translate(621.3 229.1) rotate(327.8) scale(1.22 1)" font-size="21.8">0</text><text transform="translate(1130.0 75.3) rotate(359.2) scale(1.22 1)" font-size="21.5">0</text><text transform="translate(1144.0 74.9) rotate(360.0) scale(1.22 1)" font-size="21.5">0</text><text transform="translate(1161.1 74.5) rotate(361.6) scale(1.22 1)" font-size="21.5">0</text><text transform="translate(1178.3 74.5) rotate(363.2) scale(1.22 1)" font-size="21.5">1</text><text transform="translate(1195.4 75.1) rotate(364.8) scale(1.22 1)" font-size="21.5">1</text><text transform="translate(1212.4 76.1) rotate(366.4) scale(1.22 1)" font-size="21.4">0</text><text transform="translate(1229.4 77.6) rotate(368.0) scale(1.22 1)" font-size="21.4">0</text><text transform="translate(1246.4 79.6) rotate(369.6) scale(1.22 1)" font-size="21.4">0</text><text transform="translate(1263.3 82.1) rotate(371.2) scale(1.22 1)" font-size="21.4">1</text><text transform="translate(1280.0 85.0) rotate(372.8) scale(1.22 1)" font-size="21.3">1</text><text transform="translate(1296.6 88.7) rotate(374.3) scale(1.22 1)" font-size="21.3">0</text><text transform="translate(1313.0 93.2) rotate(375.9) scale(1.22 1)" font-size="21.3">1</text><text transform="translate(1329.2 98.2) rotate(377.5) scale(1.22 1)" font-size="21.3">1</text><text transform="translate(1345.3 103.6) rotate(379.1) scale(1.22 1)" font-size="21.3">0</text><text transform="translate(1361.2 109.4) rotate(380.6) scale(1.22 1)" font-size="21.2">0</text><text transform="translate(1376.9 115.6) rotate(382.2) scale(1.22 1)" font-size="21.2">1</text><text transform="translate(1392.4 122.3) rotate(383.8) scale(1.22 1)" font-size="21.2">0</text><text transform="translate(1407.7 129.4) rotate(385.3) scale(1.22 1)" font-size="21.2">1</text><text transform="translate(1422.8 136.9) rotate(386.9) scale(1.22 1)" font-size="21.2">1</text><text transform="translate(1437.7 144.8) rotate(388.5) scale(1.22 1)" font-size="21.1">0</text><text transform="translate(1452.3 153.1) rotate(390.0) scale(1.22 1)" font-size="21.1">1</text><text transform="translate(1466.7 161.8) rotate(391.6) scale(1.22 1)" font-size="21.1">0</text><text transform="translate(1480.8 170.8) rotate(393.2) scale(1.22 1)" font-size="21.1">0</text><text transform="translate(1494.7 180.3) rotate(394.7) scale(1.22 1)" font-size="21.0">1</text><text transform="translate(1508.3 190.1) rotate(396.3) scale(1.22 1)" font-size="21.0">0</text><text transform="translate(1750.0 718.1) rotate(94.9) scale(1.22 1)" font-size="20.3">0</text><text transform="translate(1748.3 734.0) rotate(97.3) scale(1.22 1)" font-size="20.2">0</text><text transform="translate(1745.9 749.8) rotate(99.7) scale(1.22 1)" font-size="20.2">0</text><text transform="translate(1742.9 765.5) rotate(102.2) scale(1.22 1)" font-size="20.2">1</text><text transform="translate(1739.2 781.1) rotate(104.6) scale(1.22 1)" font-size="20.2">1</text><text transform="translate(1734.8 796.4) rotate(107.0) scale(1.22 1)" font-size="20.1">0</text><text transform="translate(1729.8 811.5) rotate(109.4) scale(1.22 1)" font-size="20.1">0</text><text transform="translate(140.3 1042.1) rotate(271.0) scale(1.22 1)" font-size="22.4">1</text><text transform="translate(140.8 1024.2) rotate(272.0) scale(1.22 1)" font-size="22.4">0</text><text transform="translate(141.6 1006.3) rotate(273.1) scale(1.22 1)" font-size="22.4">0</text><text transform="translate(142.7 988.4) rotate(274.1) scale(1.22 1)" font-size="22.4">0</text><text transform="translate(144.1 970.6) rotate(275.1) scale(1.22 1)" font-size="22.4">0</text><text transform="translate(150.4 917.3) rotate(278.2) scale(1.22 1)" font-size="22.3">0</text><text transform="translate(156.1 882.1) rotate(280.2) scale(1.22 1)" font-size="22.3">0</text><text transform="translate(159.4 864.6) rotate(281.2) scale(1.22 1)" font-size="22.3">0</text><text transform="translate(191.3 744.1) rotate(288.3) scale(1.22 1)" font-size="22.2">1</text><text transform="translate(197.1 727.3) rotate(289.4) scale(1.22 1)" font-size="22.2">1</text><text transform="translate(307.4 505.9) rotate(303.5) scale(1.22 1)" font-size="22.1">0</text><text transform="translate(348.4 448.5) rotate(307.5) scale(1.22 1)" font-size="22.0">0</text><text transform="translate(359.3 434.6) rotate(308.6) scale(1.22 1)" font-size="22.0">1</text><text transform="translate(370.4 420.9) rotate(309.6) scale(1.22 1)" font-size="22.0">1</text><text transform="translate(381.7 407.5) rotate(310.6) scale(1.22 1)" font-size="22.0">1</text><text transform="translate(393.3 394.2) rotate(311.6) scale(1.22 1)" font-size="22.0">1</text><text transform="translate(405.1 381.1) rotate(312.6) scale(1.22 1)" font-size="22.0">1</text><text transform="translate(417.1 368.3) rotate(313.6) scale(1.22 1)" font-size="22.0">0</text><text transform="translate(429.3 355.7) rotate(314.6) scale(1.22 1)" font-size="22.0">0</text><text transform="translate(441.8 343.3) rotate(315.6) scale(1.22 1)" font-size="22.0">1</text><text transform="translate(454.5 331.1) rotate(316.6) scale(1.22 1)" font-size="22.0">1</text><text transform="translate(467.3 319.2) rotate(317.6) scale(1.22 1)" font-size="21.9">1</text><text transform="translate(480.4 307.5) rotate(318.6) scale(1.22 1)" font-size="21.9">0</text><text transform="translate(493.6 296.0) rotate(319.6) scale(1.22 1)" font-size="21.9">0</text><text transform="translate(507.1 284.8) rotate(320.6) scale(1.22 1)" font-size="21.9">0</text><text transform="translate(520.7 273.8) rotate(321.6) scale(1.22 1)" font-size="21.9">0</text><text transform="translate(534.5 263.0) rotate(322.6) scale(1.22 1)" font-size="21.9">0</text><text transform="translate(577.1 232.3) rotate(325.6) scale(1.22 1)" font-size="21.9">1</text><text transform="translate(1212.5 54.9) rotate(366.2) scale(1.22 1)" font-size="21.4">1</text><text transform="translate(1229.5 56.4) rotate(367.7) scale(1.22 1)" font-size="21.4">1</text><text transform="translate(1246.4 58.3) rotate(369.3) scale(1.22 1)" font-size="21.4">0</text><text transform="translate(1263.3 60.7) rotate(370.8) scale(1.22 1)" font-size="21.4">0</text><text transform="translate(1688.1 360.7) rotate(419.1) scale(1.22 1)" font-size="20.7">1</text><text transform="translate(1696.1 375.1) rotate(420.6) scale(1.22 1)" font-size="20.7">1</text><text transform="translate(1703.7 389.8) rotate(422.1) scale(1.22 1)" font-size="20.7">0</text><text transform="translate(1711.0 404.6) rotate(423.6) scale(1.22 1)" font-size="20.7">0</text><text transform="translate(1717.8 419.5) rotate(425.1) scale(1.22 1)" font-size="20.6">0</text><text transform="translate(1730.3 449.9) rotate(428.1) scale(1.22 1)" font-size="20.6">0</text><text transform="translate(1735.9 465.3) rotate(429.6) scale(1.22 1)" font-size="20.6">1</text><text transform="translate(118.1 1042.1) rotate(271.0) scale(1.22 1)" font-size="22.4">0</text><text transform="translate(118.6 1024.2) rotate(272.0) scale(1.22 1)" font-size="22.4">0</text><text transform="translate(119.4 1006.3) rotate(273.0) scale(1.22 1)" font-size="22.4">0</text><text transform="translate(120.5 988.4) rotate(274.0) scale(1.22 1)" font-size="22.4">1</text><text transform="translate(153.0 795.0) rotate(285.0) scale(1.22 1)" font-size="22.3">0</text><text transform="translate(186.0 693.6) rotate(290.9) scale(1.22 1)" font-size="22.2">0</text><text transform="translate(192.5 677.1) rotate(291.9) scale(1.22 1)" font-size="22.2">0</text><text transform="translate(199.3 660.7) rotate(292.9) scale(1.22 1)" font-size="22.2">0</text><text transform="translate(206.4 644.4) rotate(293.9) scale(1.22 1)" font-size="22.2">0</text><text transform="translate(213.8 628.2) rotate(294.9) scale(1.22 1)" font-size="22.2">1</text><text transform="translate(221.4 612.2) rotate(295.9) scale(1.22 1)" font-size="22.2">0</text><text transform="translate(229.3 596.4) rotate(296.9) scale(1.22 1)" font-size="22.2">0</text><text transform="translate(237.4 580.7) rotate(297.9) scale(1.22 1)" font-size="22.1">0</text><text transform="translate(245.9 565.1) rotate(298.9) scale(1.22 1)" font-size="22.1">0</text><text transform="translate(254.5 549.7) rotate(299.8) scale(1.22 1)" font-size="22.1">0</text><text transform="translate(263.5 534.4) rotate(300.8) scale(1.22 1)" font-size="22.1">0</text><text transform="translate(272.7 519.3) rotate(301.8) scale(1.22 1)" font-size="22.1">0</text><text transform="translate(282.2 504.4) rotate(302.8) scale(1.22 1)" font-size="22.1">0</text><text transform="translate(301.9 475.1) rotate(304.8) scale(1.22 1)" font-size="22.1">0</text><text transform="translate(312.1 460.7) rotate(305.8) scale(1.22 1)" font-size="22.1">1</text><text transform="translate(333.2 432.5) rotate(307.7) scale(1.22 1)" font-size="22.0">0</text><text transform="translate(344.1 418.6) rotate(308.7) scale(1.22 1)" font-size="22.0">0</text><text transform="translate(355.3 405.0) rotate(309.7) scale(1.22 1)" font-size="22.0">0</text><text transform="translate(366.7 391.6) rotate(310.7) scale(1.22 1)" font-size="22.0">0</text><text transform="translate(378.3 378.3) rotate(311.7) scale(1.22 1)" font-size="22.0">0</text><text transform="translate(606.0 187.7) rotate(328.3) scale(1.22 1)" font-size="21.8">0</text><text transform="translate(1115.1 33.3) rotate(358.4) scale(1.22 1)" font-size="21.5">1</text></g></g>
<rect x="0" y="0" width="1920" height="1080" fill="url(#dim)"/>
<g><line x1="166" y1="82" x2="1748" y2="82" stroke="#6cc0f2" stroke-opacity="0.9" stroke-width="2.4"/><line x1="166.01" y1="82" x2="166" y2="1060" stroke="url(#vl)" stroke-opacity="0.8" stroke-width="3"/><line x1="1143.51" y1="82" x2="1143.5" y2="1060" stroke="url(#vl)" stroke-opacity="0.95" stroke-width="2.8"/><line x1="1748.01" y1="82" x2="1748" y2="1060" stroke="url(#vl)" stroke-opacity="0.95" stroke-width="2.8"/><line x1="1144" y1="686" x2="1748" y2="686" stroke="#1f6ee2" stroke-opacity="0.82" stroke-width="1.9"/><line x1="1374.51" y1="686" x2="1374.5" y2="1060" stroke="url(#vl)" stroke-opacity="0.85" stroke-width="1.9"/><line x1="1144" y1="829" x2="1374" y2="829" stroke="#1a62dc" stroke-opacity="0.78" stroke-width="1.7"/><line x1="1287.5" y1="686" x2="1287.5" y2="829" stroke="#1c66de" stroke-opacity="0.78" stroke-width="1.7"/><line x1="1288" y1="772" x2="1374" y2="772" stroke="#1c66de" stroke-opacity="0.78" stroke-width="1.5"/><line x1="1316" y1="772" x2="1316" y2="829" stroke="#1c66de" stroke-opacity="0.78" stroke-width="1.4"/><line x1="1288" y1="802" x2="1316" y2="802" stroke="#1c66de" stroke-opacity="0.7" stroke-width="1.1"/><line x1="1299" y1="772" x2="1299" y2="802" stroke="#1c66de" stroke-opacity="0.7" stroke-width="1"/></g>
<circle cx="1327" cy="66" r="17" fill="url(#dot)"/>
<circle cx="886" cy="94" r="15" fill="url(#dot)"/>
<circle cx="1531" cy="248" r="15" fill="url(#dot)"/>
<circle cx="1727" cy="528" r="13" fill="url(#dot)"/>
<circle cx="1331" cy="673" r="15" fill="url(#dot)"/>
<circle cx="1299" cy="774" r="13" fill="url(#dot)"/>
<circle cx="1657" cy="932" r="8" fill="url(#dot)"/>
<circle cx="168" cy="70" r="13" fill="url(#dot)"/>
<text x="655" y="35" font-family="'Liberation Sans',sans-serif" font-style="italic" font-size="30" text-anchor="middle"  fill="#2f9cff" stroke="#2f9cff" stroke-width="5" opacity="0.55" filter="url(#gl)">a</text><text x="655" y="35" font-family="'Liberation Sans',sans-serif" font-style="italic" font-size="30" text-anchor="middle"  fill="#8ceaff" stroke="#8ceaff" stroke-width="0.9">a</text><text x="655" y="35" font-family="'Liberation Sans',sans-serif" font-style="italic" font-size="30" text-anchor="middle"  fill="#c8fbff" opacity="0.55" filter="url(#gl2)">a</text>
<text x="1445" y="38" font-family="'Liberation Sans',sans-serif" font-style="italic" font-size="30" text-anchor="middle"  fill="#2f9cff" stroke="#2f9cff" stroke-width="5" opacity="0.55" filter="url(#gl)">b</text><text x="1445" y="38" font-family="'Liberation Sans',sans-serif" font-style="italic" font-size="30" text-anchor="middle"  fill="#8ceaff" stroke="#8ceaff" stroke-width="0.9">b</text><text x="1445" y="38" font-family="'Liberation Sans',sans-serif" font-style="italic" font-size="30" text-anchor="middle"  fill="#c8fbff" opacity="0.55" filter="url(#gl2)">b</text>
<text x="1812" y="394" font-family="'Liberation Sans',sans-serif" font-style="italic" font-size="32" text-anchor="middle"  fill="#0a6aff" stroke="#0a6aff" stroke-width="5" opacity="0.55" filter="url(#gl)">b</text><text x="1812" y="394" font-family="'Liberation Sans',sans-serif" font-style="italic" font-size="32" text-anchor="middle"  fill="#38e4ff" stroke="#38e4ff" stroke-width="1.0">b</text><text x="1812" y="394" font-family="'Liberation Sans',sans-serif" font-style="italic" font-size="32" text-anchor="middle"  fill="#a8fbff" opacity="0.55" filter="url(#gl2)">b</text>
<text x="561" y="748" font-family="'Liberation Sans',sans-serif" font-style="italic" font-size="41" text-anchor="middle" letter-spacing="10" fill="#1c8cff" stroke="#1c8cff" stroke-width="5" opacity="0.55" filter="url(#gl)">a+b</text><text x="561" y="748" font-family="'Liberation Sans',sans-serif" font-style="italic" font-size="41" text-anchor="middle" letter-spacing="10" fill="#33bdf7" stroke="#33bdf7" stroke-width="1.3">a+b</text><text x="561" y="748" font-family="'Liberation Sans',sans-serif" font-style="italic" font-size="41" text-anchor="middle" letter-spacing="10" fill="#8fe2ff" opacity="0.55" filter="url(#gl2)">a+b</text>
<text x="554" y="809" font-family="'Liberation Sans',sans-serif" font-style="italic" font-size="41" text-anchor="middle"  fill="#1c8cff" stroke="#1c8cff" stroke-width="5" opacity="0.55" filter="url(#gl)">a</text><text x="554" y="809" font-family="'Liberation Sans',sans-serif" font-style="italic" font-size="41" text-anchor="middle"  fill="#33bdf7" stroke="#33bdf7" stroke-width="1.3">a</text><text x="554" y="809" font-family="'Liberation Sans',sans-serif" font-style="italic" font-size="41" text-anchor="middle"  fill="#8fe2ff" opacity="0.55" filter="url(#gl2)">a</text>
<text x="718" y="748" font-family="'Liberation Sans',sans-serif" font-style="italic" font-size="41" text-anchor="middle"  fill="#1c8cff" stroke="#1c8cff" stroke-width="5" opacity="0.55" filter="url(#gl)">a</text><text x="718" y="748" font-family="'Liberation Sans',sans-serif" font-style="italic" font-size="41" text-anchor="middle"  fill="#33bdf7" stroke="#33bdf7" stroke-width="1.3">a</text><text x="718" y="748" font-family="'Liberation Sans',sans-serif" font-style="italic" font-size="41" text-anchor="middle"  fill="#8fe2ff" opacity="0.55" filter="url(#gl2)">a</text>
<text x="720" y="814" font-family="'Liberation Sans',sans-serif" font-style="italic" font-size="41" text-anchor="middle"  fill="#1c8cff" stroke="#1c8cff" stroke-width="5" opacity="0.55" filter="url(#gl)">b</text><text x="720" y="814" font-family="'Liberation Sans',sans-serif" font-style="italic" font-size="41" text-anchor="middle"  fill="#33bdf7" stroke="#33bdf7" stroke-width="1.3">b</text><text x="720" y="814" font-family="'Liberation Sans',sans-serif" font-style="italic" font-size="41" text-anchor="middle"  fill="#8fe2ff" opacity="0.55" filter="url(#gl2)">b</text>
<text x="881" y="776" font-family="'Liberation Sans',sans-serif" font-style="italic" font-size="38" text-anchor="middle"  fill="#1c8cff" stroke="#1c8cff" stroke-width="5" opacity="0.55" filter="url(#gl)">1.618</text><text x="881" y="776" font-family="'Liberation Sans',sans-serif" font-style="italic" font-size="38" text-anchor="middle"  fill="#33bdf7" stroke="#33bdf7" stroke-width="1.3">1.618</text><text x="881" y="776" font-family="'Liberation Sans',sans-serif" font-style="italic" font-size="38" text-anchor="middle"  fill="#8fe2ff" opacity="0.55" filter="url(#gl2)">1.618</text>
<line x1="502" y1="769.5" x2="616" y2="769.5" stroke="#1c8cff" stroke-width="8" opacity="0.5" filter="url(#gl)"/><line x1="502" y1="769.5" x2="616" y2="769.5" stroke="#3db8f6" stroke-width="3"/>
<line x1="684.5" y1="769.5" x2="751" y2="769.5" stroke="#1c8cff" stroke-width="8" opacity="0.5" filter="url(#gl)"/><line x1="684.5" y1="769.5" x2="751" y2="769.5" stroke="#3db8f6" stroke-width="3"/>
<line x1="642.5" y1="764.5" x2="666" y2="764.5" stroke="#1c8cff" stroke-width="8" opacity="0.5" filter="url(#gl)"/><line x1="642.5" y1="764.5" x2="666" y2="764.5" stroke="#3db8f6" stroke-width="3"/>
<line x1="642.5" y1="774.5" x2="666" y2="774.5" stroke="#1c8cff" stroke-width="8" opacity="0.5" filter="url(#gl)"/><line x1="642.5" y1="774.5" x2="666" y2="774.5" stroke="#3db8f6" stroke-width="3"/>
<line x1="777" y1="764.5" x2="800" y2="764.5" stroke="#1c8cff" stroke-width="8" opacity="0.5" filter="url(#gl)"/><line x1="777" y1="764.5" x2="800" y2="764.5" stroke="#3db8f6" stroke-width="3"/>
<line x1="777" y1="774.5" x2="800" y2="774.5" stroke="#1c8cff" stroke-width="8" opacity="0.5" filter="url(#gl)"/><line x1="777" y1="774.5" x2="800" y2="774.5" stroke="#3db8f6" stroke-width="3"/>
</svg>
<style>
.dl{position:absolute;width:100px;text-align:center;color:#fff;font-size:12px;line-height:15px;font-family:"Liberation Sans",sans-serif;text-shadow:0 1px 2px rgba(0,0,0,.95),0 0 3px rgba(0,0,0,.75),1px 1px 1px rgba(0,0,0,.8);transform:scaleX(.94)}
.di{position:absolute;width:48px;height:48px;overflow:visible}
</style>
<svg width="0" height="0" style="position:absolute"><defs>
<symbol id="sc" viewBox="0 0 13 13"><rect x="0" y="0" width="13" height="13" fill="#f4f4f4"/><rect x="0.500" y="0.500" width="12" height="12" fill="none" stroke="#d0d0d0" stroke-width="1"/><path d="M6 3h4.500v4.500l-1.600-1.600C7 7.200 5.500 8.500 5.800 11 3.500 9 3.500 6 7.500 4.600z" fill="#2a5aa8"/></symbol>
<linearGradient id="fy" x1="0" y1="0" x2="1" y2="0"><stop offset="0" stop-color="#f5d46a"/><stop offset="1" stop-color="#fbe28e"/></linearGradient>
<linearGradient id="fy2" x1="0" y1="0" x2="1" y2="0"><stop offset="0" stop-color="#fdeeb6"/><stop offset="1" stop-color="#f9df8c"/></linearGradient>
<symbol id="fdoc" viewBox="0 0 30 40"><path d="M1 1h14l1 1h9v36H9z" fill="#e9c85c"/><path d="M9 6l14.500 3v29L9 38z" fill="#fff"/><path d="M19 9.500h6.500V36H19z" fill="#f3f6fa"/><path d="M20 12h4.500M20 15h4.500M20 18h4.500M20 28h4.500M20 31h4.500" stroke="#b8c4d4" stroke-width="1"/><rect x="20" y="21" width="4.500" height="3" fill="#3a9ae6"/><rect x="20" y="24.500" width="4.500" height="1.500" fill="#2a6a50"/><path d="M1 1l8 4.500 9.500 1V38l-9.500 1.500L1 33z" fill="url(#fy2)"/><path d="M25 27.500h3.500V36H25z" fill="#f4d878"/></symbol>
<symbol id="fempty" viewBox="0 0 27 40"><path d="M1 1h22.500v20.500h2.500V32H8z" fill="url(#fy)"/><path d="M0 1.500l9 5.500V38.500L0 32.500z" fill="url(#fy2)"/></symbol>
<symbol id="fpap" viewBox="0 0 30 40"><path d="M1 1h22v34H8z" fill="#f0cf68"/><path d="M9 4l11 2v32L9 38z" fill="#fafafa"/><path d="M17 5l11 2.500V38l-11-1z" fill="#fff"/><path d="M17 5l3 1v31l-3-0.500z" fill="#d8d8d8"/><path d="M0 1.500l8.500 5V39L0 33z" fill="url(#fy2)"/></symbol>
</defs></svg>

<svg class="di" style="left:10.3px;top:3.8px" viewBox="0 0 48 48"><path d="M6.500 8l36-0.500-5.500 35.500c-4 1.500-16 1.500-20 0z" fill="#e4ecf4" fill-opacity=".88"/>
<path d="M8 8c2-4 6-5 9-3 2-3 6-3 8-1 3-2 7-1 8 1 3-1 7 0 8.500 3-4 3-29 3-33.500 0z" fill="#fbfcfe"/>
<path d="M10 12l5 30M38 12l-4 30M24 13v30" stroke="#c4d0dc" stroke-width="1" fill="none" opacity=".8"/>
<path d="M19 20l3.500-4.500 4 1.500-1.500 2.500 3 1-4.500 3z" fill="#2a86e2"/><path d="M30.500 23l2.500 5-3 3h-3l1-3-2.500-0.500 2.500-4z" fill="#2a86e2"/><path d="M16 25l4.500 0.500-0.500 2.500 2.500-0.500-0.500 5.500-3.500 0.500-3.500-4z" fill="#2a86e2"/></svg>
<div class="dl" style="left:-15.7px;top:54.0px">Корзина</div>
<svg class="di" style="left:79.8px;top:3.8px" viewBox="0 0 48 48"><circle cx="24" cy="24.500" r="20" fill="#14161c" stroke="#0da6f4" stroke-width="1.800"/><text x="25" y="36.500" font-family="'Liberation Sans',sans-serif" font-weight="bold" font-style="italic" font-size="34" fill="#12a8fb" text-anchor="middle">C</text><use href="#sc" x="2" y="34.500" width="12.500" height="12.500"/></svg>
<div class="dl" style="left:53.8px;top:54.0px">Advanced<br>SystemCare</div>
<svg class="di" style="left:149.5px;top:3.8px" viewBox="0 0 48 48"><circle cx="24.500" cy="23.500" r="21" fill="#1488d6"/><path d="M14 15.500c4-1.500 8-0.500 11.500 2.500 3-3.500 7.500-4.500 12-3.500-4 0.500-7.500 2-10 5.500l-2 3-2.500-3.500c-2-2.500-5-3.800-9-4z" fill="#fff"/><path d="M1 28c6-3 13-2.500 18 2l2.500 3 3-3.500c4-4.500 10.500-6 17.500-4-6.500 0.500-12 3-16 8.500l-4.500 6-4-5.500C14 30 8 28 1 28z" fill="#fff"/><use href="#sc" x="2" y="34.500" width="12.500" height="12.500"/></svg>
<div class="dl" style="left:123.5px;top:54.0px">OpenOffice<br>4.1.11</div>
<svg class="di" style="left:10.3px;top:95.3px" viewBox="0 0 48 48"><defs><linearGradient id="e1" x1="0.200" y1="0" x2="0.800" y2="1"><stop offset="0" stop-color="#2fb4ee"/><stop offset="1" stop-color="#0b57a4"/></linearGradient><linearGradient id="e2" x1="0" y1="0.300" x2="1" y2="0.400"><stop offset="0" stop-color="#28a8e8"/><stop offset="0.600" stop-color="#3fcf9a"/><stop offset="1" stop-color="#7fe04a"/></linearGradient></defs>
<circle cx="24" cy="24" r="22" fill="url(#e1)"/><path d="M2.500 20C4 9 13 2 24 2c12.500 0 22 9 22 19 0 7-5 11.500-11.500 11.500-5 0-8-2-8-5 0-2.500 2-3.500 2-6.500 0-4-4-7-9-7-7 0-13 3-17 6z" fill="url(#e2)"/><path d="M19 26c0 10 8 17 18.500 15-4 3.500-8.500 5-13.500 5C11 46 2.500 35 5 24.500 7 18 13 14 20.500 14 19 17 19 21 19 26z" fill="#1763b8"/><use href="#sc" x="2" y="34.500" width="12.500" height="12.500"/></svg>
<div class="dl" style="left:-15.7px;top:145.5px">Microsoft<br>Edge</div>
<svg class="di" style="left:10.3px;top:186.8px" viewBox="0 0 48 48"><defs><linearGradient id="s1" x1="0" y1="0" x2="0.300" y2="1"><stop offset="0" stop-color="#111d3e"/><stop offset="0.600" stop-color="#16356e"/><stop offset="1" stop-color="#1a8fc8"/></linearGradient></defs><circle cx="24" cy="24.500" r="21.500" fill="url(#s1)"/><circle cx="32" cy="19" r="7.500" fill="#fff"/><circle cx="32" cy="19" r="4.300" fill="#17326a"/><circle cx="32" cy="19" r="3" fill="#fff"/><path d="M2.500 23l14 6 9-6 5 6-9 7.500c-1 3-5 4.500-8 3L3 34z" fill="#fff"/><circle cx="17.500" cy="33" r="4.500" fill="#fff" stroke="#1a4a8a" stroke-width="1.200"/><use href="#sc" x="2" y="34.500" width="12.500" height="12.500"/></svg>
<div class="dl" style="left:-15.7px;top:237.0px">Steam</div>
<svg class="di" style="left:10.3px;top:278.3px" viewBox="0 0 48 48"><circle cx="24" cy="24.500" r="22" fill="#3a92ea"/><path d="M28 3.500l9 1.500-9 17 12-1.500L20 46l-7-2 9-16-12 1z" fill="#f2d23a"/><ellipse cx="25" cy="26" rx="11.500" ry="13" fill="#f3dcb4" stroke="#3a2a18" stroke-width="1"/><path d="M13 19c1-9 9-13 17-10 5 2 8 7 6.500 14-2-4-4-6-6-7-4 2-10 2-17.500 3z" fill="#e8c634" stroke="#3a2a18" stroke-width="1"/><path d="M32 21c3 1 4 6 2 11l-3-2z" fill="#8a8a8a"/><ellipse cx="19.500" cy="24" rx="1.300" ry="2.300" fill="#222"/><ellipse cx="26.500" cy="23" rx="1.300" ry="2.300" fill="#222"/><path d="M17 31.500c4 2 9 1 12-2-1 4-4 6.500-7.500 6.500-2.500 0-4-2-4.500-4.500z" fill="#fff" stroke="#3a2a18" stroke-width=".9"/><use href="#sc" x="2" y="34.500" width="12.500" height="12.500"/></svg>
<div class="dl" style="left:-15.7px;top:328.5px">Fallout 4</div>
<svg class="di" style="left:10.3px;top:369.8px" viewBox="0 0 48 48"><rect x="2" y="2.500" width="45" height="44" fill="#000"/><path d="M30 2.500h17v44H34L16 24z" fill="#fff"/><path d="M33 7c3-3 7-3 9 0 2 3 0 6-3 8 3 1 4 3 3 6l-3-2c-1 2-3 2-5 1l2-3c-2-1-3-3-2-5 1-2 3-2 4-1-1-2-3-3-5-4z" fill="#000"/><path d="M27 20l5 3 3-2 2 3 4-2 2 3 4-1v4l-5 1-1 3-4-1-2 3-4-2-3 2z" fill="#000"/><path d="M30 34l3 6 2-5 2 7 2-6 3 8h-9z" fill="#000"/><use href="#sc" x="2" y="34.500" width="12.500" height="12.500"/></svg>
<div class="dl" style="left:-15.7px;top:420.0px">The Elder<br>Scrolls ...</div>
<svg class="di" style="left:10.3px;top:461.3px" viewBox="0 0 48 48"><circle cx="24.500" cy="23.500" r="21" fill="#f4f4f4"/><path d="M24.500 45a21 21 0 0 0 19-12c-8 8-28 8-38 0a21 21 0 0 0 19 12z" fill="#dcdcdc"/><path d="M13 11l11.500 14V40M36 11L24.500 25" stroke="#e3151c" stroke-width="4.200" fill="none" stroke-linejoin="round"/><use href="#sc" x="2" y="34.500" width="12.500" height="12.500"/></svg>
<div class="dl" style="left:-15.7px;top:511.5px">Yandex</div>
<svg class="di" style="left:10.3px;top:552.8px" viewBox="0 0 48 48"><defs><radialGradient id="f1" cx="0.700" cy="0.150" r="1"><stop offset="0" stop-color="#fff36a"/><stop offset="0.350" stop-color="#ffb01e"/><stop offset="0.650" stop-color="#ff5a2a"/><stop offset="1" stop-color="#e3157c"/></radialGradient><radialGradient id="f2" cx="0.500" cy="0.300" r="0.700"><stop offset="0" stop-color="#a05cf8"/><stop offset="1" stop-color="#5b2dc4"/></radialGradient></defs>
<path d="M24 6c3-2 5-3 6-5 1 4 4 6 6 9 5 4 9 9 9 16 0 11-9.500 19.500-21 19.500S3.500 37 3.500 26c0-6 2-11 5-14 0 2 1 4 2 5C11 12 17 8 24 6z" fill="url(#f1)"/><circle cx="25" cy="26" r="11" fill="url(#f2)"/><path d="M10 16c3-3 6-4 9-3 2 1 4 3 7 3 2 0 4 1 5 3-3-1-6 0-8 2-3 3-2 7 1 9-5 1-10-1-12-5-1-3-1-6-2-9z" fill="#ff9a1a"/><use href="#sc" x="2" y="34.500" width="12.500" height="12.500"/></svg>
<div class="dl" style="left:-15.7px;top:603.0px">Firefox</div>
<svg class="di" style="left:10.3px;top:644.3px" viewBox="0 0 48 48"><path d="M24 1.500l6 2 4-1 6.500 6.500-1.500 5 2 6-4 16-13 10.500L11 36 7 20l2-6-1.500-5L14 2.500l4 1z" fill="#fb4a1c"/><path d="M24 1.500l6 2 4-1 6.500 6.500-1.500 5 2 6-4 16-13 10.500z" fill="#ff5a22"/><path d="M24 9l7-1.500 5 6.500-3 6 1 4-5 4-2 3-3 3.500-3-3.500-2-3-5-4 1-4-3-6 5-6.500z" fill="#fff"/><path d="M19 17l3 1.500-1 3zM29 17l-3 1.500 1 3zM22 24h4l-2 6z" fill="#fb4a1c"/><use href="#sc" x="2" y="34.500" width="12.500" height="12.500"/></svg>
<div class="dl" style="left:-15.7px;top:694.5px">Brave</div>
<svg class="di" style="left:10.3px;top:735.8px" viewBox="0 0 48 48"><defs><linearGradient id="o1" x1="0" y1="0" x2="1" y2="1"><stop offset="0" stop-color="#ff1b2d"/><stop offset="1" stop-color="#c20d22"/></linearGradient></defs><ellipse cx="24" cy="24.500" rx="21.500" ry="21.500" fill="url(#o1)"/><ellipse cx="23" cy="24.500" rx="11" ry="16.500" fill="#032a72"/><path d="M30 4.500c9 3 15.500 11 15.500 20S39 41.500 30 44.500c4.500-4 7.500-11.500 7.500-20S34.500 8.500 30 4.500z" fill="#a50b1e" opacity=".7"/><use href="#sc" x="2" y="34.500" width="12.500" height="12.500"/></svg>
<div class="dl" style="left:-15.7px;top:786.0px">Браузер<br>Opera</div>
<svg class="di" style="left:10.3px;top:827.3px" viewBox="0 0 48 48"><rect x="1.500" y="2.500" width="45" height="44" rx="9" fill="#23233c"/><path d="M10 11l14-3 14 3c1 12-3 22-14 29C13 33 9 23 10 11z" fill="#1fc4f4"/><path d="M24 8l14 3c1 12-3 22-14 29z" fill="#1a7ae8"/><path d="M16 15l8-2 8 2c0 8-2 14-8 19-6-5-8-11-8-19z" fill="#23233c"/><path d="M30 14l-4 10-3-2.500-8 10 4.500-11-3-2z" fill="#27d4f8"/><use href="#sc" x="2" y="34.500" width="12.500" height="12.500"/></svg>
<div class="dl" style="left:-15.7px;top:877.5px">iTop VPN</div>
<svg class="di" style="left:10.3px;top:918.8px" viewBox="0 0 48 48"><rect x="3" y="3.500" width="34" height="43" fill="#e6e8ea" stroke="#b8bcc0" stroke-width="1"/><rect x="5.500" y="6" width="29" height="30" fill="#2a5aa8"/><path d="M5.500 6h29v14c-6-4-12 3-18 0s-8 0-11 2z" fill="#7fb0e8"/><path d="M14 10c4-2 9-1 11 2-4 1-8 1-11-2z" fill="#e8f0fa"/><path d="M5.500 28c8-3 20-3 29 0v8h-29z" fill="#1a2a50"/><path d="M5.500 27c6-2 12-1 16 0-6 1-11 2-16 2z" fill="#dfe8f2"/><path d="M43 16l1.500 1.500-22 20-2-2z" fill="#c8202c"/><path d="M20.500 35.500l2 2c-2 3-5 5-8 5 2-2 3-5 6-7z" fill="#d8d8d8" stroke="#888" stroke-width=".6"/><use href="#sc" x="2" y="34.500" width="12.500" height="12.500"/></svg>
<div class="dl" style="left:-15.7px;top:969.0px">paint.net</div>
<svg class="di" style="left:79.8px;top:827.3px" viewBox="0 0 48 48"><defs><linearGradient id="fn" x1="0" y1="0" x2="0" y2="1"><stop offset="0" stop-color="#ff6a4a"/><stop offset="0.450" stop-color="#ea3212"/><stop offset="1" stop-color="#d82a0c"/></linearGradient></defs><rect x="2" y="2.500" width="44.500" height="44" rx="9" fill="url(#fn)"/><path d="M17 8h18v7H25v6h8v7h-8v12h-8z" fill="#000"/><use href="#sc" x="2" y="34.500" width="12.500" height="12.500"/></svg>
<div class="dl" style="left:53.8px;top:877.5px">GenerateF...<br>SE XXL</div>
<svg class="abs" style="left:88.8px;top:650.5px" width="30" height="40"><use href="#fpap" width="30" height="40"/></svg>
<div class="dl" style="left:53.8px;top:694.5px">КВАРТИРЫ<br>ПЛЮ</div>
<svg class="abs" style="left:158.5px;top:650.5px" width="30" height="40"><use href="#fpap" width="30" height="40"/></svg>
<div class="dl" style="left:123.5px;top:694.5px">фото мои</div>
<svg class="abs" style="left:88.8px;top:742.0px" width="30" height="40"><use href="#fpap" width="30" height="40"/></svg>
<div class="dl" style="left:53.8px;top:786.0px">реквизиты</div>
<svg class="abs" style="left:88.8px;top:925.0px" width="30" height="40"><use href="#fpap" width="30" height="40"/></svg>
<div class="dl" style="left:53.8px;top:969.0px">OpenOffice<br>4.1.11 (ru)...</div>
<svg class="abs" style="left:795px;top:190px" width="26" height="44" viewBox="0 0 26 44"><path d="M2 3h13v6H2z" fill="#f2d56c"/><path d="M3 8l10 2.500 8-1v30l-8 2.500L3 39z" fill="#f1eef4"/><rect x="13" y="10.500" width="8" height="7.500" fill="#c01a3a"/><rect x="13" y="18" width="8" height="8" fill="#4a3fd0"/><rect x="13" y="26" width="8" height="8.500" fill="#17a030"/><rect x="13" y="34.500" width="8" height="3" fill="#f050e0"/><rect x="6" y="18" width="3" height="5" fill="#3a6ad0"/></svg>
<div class="dl" style="left:752.0px;top:237.0px">нексус</div>
<svg class="abs" style="left:995.5px;top:193.0px" width="30" height="40"><use href="#fdoc" width="30" height="40"/></svg>
<div class="dl" style="left:960.5px;top:237.0px">plagin</div>
<svg class="abs" style="left:1065.3px;top:193.0px" width="30" height="40"><use href="#fdoc" width="30" height="40"/></svg>
<div class="dl" style="left:1030.3px;top:237.0px">DDD</div>
<svg class="abs" style="left:1135.0px;top:193.0px" width="30" height="40"><use href="#fdoc" width="30" height="40"/></svg>
<div class="dl" style="left:1100.0px;top:237.0px">лучшее тело</div>
<svg class="abs" style="left:1204.6px;top:193.0px" width="30" height="40"><use href="#fdoc" width="30" height="40"/></svg>
<div class="dl" style="left:1169.6px;top:237.0px">пресеты</div>
<svg class="abs" style="left:995.0px;top:467.5px" width="27" height="40"><use href="#fempty" width="27" height="40"/></svg>
<div class="dl" style="left:960.5px;top:511.5px">Новая папка<br>(2)</div>
<svg class="di" style="left:1405.5px;top:369.5px" viewBox="0 0 48 48"><g transform="translate(0 10)"><path d="M5 1.500h41l2 2-2.500 16.500-1.500 1.500-36 2-2-1.500-3-18.500z" fill="#000"/><path d="M17 24l27-2-1 6.500z" fill="#12c83c"/><text x="26" y="14.500" font-family="'Liberation Sans',sans-serif" font-weight="bold" font-style="italic" font-size="13" fill="#fff" text-anchor="middle">NMM</text><rect x="13" y="16.500" width="20" height="1" fill="#777"/></g><use href="#sc" x="2" y="34.500" width="12.500" height="12.500"/></svg>
<div class="dl" style="left:1379.5px;top:420.2px">NMM</div>
<svg class="di" style="left:1684.5px;top:278.0px" viewBox="0 0 48 48"><path d="M7 4c10-2 28-3 38-2 0 6-4 11-11 13 4-3 5-7 3-10-6 0-12 1-17 3 8 8 13 14 12 20-1 7-9 11-17 15l1-5-9 0 0-22c2 5 3 12 6 17 5-1 9-4 9-9 0-5-5-11-15-20z" fill="#cc0a00"/><use href="#sc" x="2" y="34.500" width="12.500" height="12.500"/></svg>
<div class="dl" style="left:1658.5px;top:328.7px">Wrye Bash</div>
<svg class="di" style="left:1684.5px;top:461.0px" viewBox="0 0 48 48"><g transform="translate(0 6.500)"><rect x="5" y="2.500" width="39" height="29.500" fill="#f4f4f4" stroke="#cfcfcf" stroke-width="1"/><rect x="13.500" y="7" width="16.500" height="22" fill="#1176d6"/><path d="M7 8h4M7 11h4M7 14h4M7 17h4M7 20h4M32 8h10M32 10.500h10M32 13h10M32 16h10M32 18.500h10M32 21h10M32 23h6" stroke="#c4c4c4" stroke-width="1"/></g><use href="#sc" x="2" y="34.500" width="12.500" height="12.500"/></svg>
<div class="dl" style="left:1658.5px;top:512.2px">f4se_loader</div>
<div id="wdg" style="position:absolute;left:0;top:0;font-family:'Liberation Sans',sans-serif">
<div class="abs" style="left:1510px;top:62px;width:132px;height:20px;border-radius:10px;background:#2b2a42"></div>
<div class="abs" style="left:1503px;top:58.500px;width:25.500px;height:25.500px;border-radius:13px;background:#2b2a42"></div>
<svg class="abs" style="left:1507px;top:63px" width="18" height="17" viewBox="0 0 18 17"><path d="M1.500 8v4M4 6.500v5.500M6.500 4.500v5M9 2.500v4" stroke="#e8e8ee" stroke-width="1.300" fill="none"/><path d="M11 6.500c1.500 0 2.800-0.500 3.500-1 0.700 0.500 2 1 3.500 1 0 4-1 6.500-3.500 8C12 13 11 10.500 11 6.500z" fill="#ef4a44"/><rect x="14" y="8" width="1.200" height="3" fill="#fff"/><rect x="14" y="11.800" width="1.200" height="1.200" fill="#fff"/></svg>
<div class="abs" style="left:1535.500px;top:65px;font-size:11.8px;line-height:14px;color:#ea4a4c;white-space:nowrap;transform:scaleX(.97);transform-origin:0 50%">Вы ВИДИМЫ!</div>
<div class="abs" style="left:1614px;top:66.500px;width:23.500px;height:10.500px;border-radius:5.500px;background:#6a3646"></div>
<div class="abs" style="left:1614.500px;top:66.500px;width:10.500px;height:10.500px;border-radius:5.500px;background:#ff5252"></div>
<div class="abs" style="left:1700px;top:65.500px;width:181px;height:18.500px;border-radius:9.500px;background:#1f2050"></div>
<div class="abs" style="left:1693.500px;top:60.500px;width:27.500px;height:27.500px;border-radius:14px;background:#1f2050"></div>
<svg class="abs" style="left:1702px;top:65px" width="11" height="19" viewBox="0 0 11 19"><path d="M5.500 0.500c2.500 2 3.500 5 3 9.500l1.500 2.500H1l1.500-2.500C2 5.500 3 2.500 5.500 0.500z" fill="#2d7ef2"/><path d="M4.500 12.500h2l-1 6z" fill="#2d7ef2"/><circle cx="5.500" cy="6" r="1.300" fill="#1f2050"/></svg>
<div class="abs" style="left:1730px;top:68.500px;font-size:12px;line-height:14px;color:#d6daf0;white-space:nowrap;transform:scaleX(.9);transform-origin:0 50%">RAM:<span style="font-size:6px"> </span>24<span style="font-size:9.5px;letter-spacing:-1px"> %</span><span style="display:inline-block;width:10px"></span>CPU:<span style="font-size:6px"> </span>1<span style="font-size:9.5px;letter-spacing:-1px"> %</span></div>
<svg class="abs" style="left:1845px;top:70px" width="15" height="9" viewBox="0 0 15 9"><rect x="0" y="0" width="10" height="9" rx="1.500" fill="#2b82f8"/><path d="M10.500 3.500L14.500 1v7l-4-2.500z" fill="#2b82f8"/></svg>
<div class="abs" style="left:1863.500px;top:66.500px;width:16.500px;height:16.500px;border-radius:8.500px;background:#22509e"></div>
<svg class="abs" style="left:1866px;top:70px" width="11" height="10" viewBox="0 0 11 10"><path d="M0.500 5h9.500M6 1l4 4-4 4" stroke="#3d8efa" stroke-width="1.500" fill="none"/></svg>
</div>
<style>
#win{position:absolute;left:63px;top:75px;width:735px;height:600px;background:#404040;box-shadow:0 0 18px rgba(0,0,0,.45),0 0 0 1px rgba(40,60,90,.55);font-family:"Liberation Sans",sans-serif;font-size:11.6px;color:#dcdcdc}
#win .tb{position:absolute;left:0;top:0;width:735px;height:28px;background:#fff;color:#000}
#win .tb .tt{position:absolute;left:26px;top:7px;font-size:12px;color:#000}
#win .lbl{position:absolute;text-align:center;white-space:nowrap;color:#dcdcdc;transform:scaleX(.93)}
#win .cmb{position:absolute;background:#e1e1e1;border:1px solid #adadad;color:#000;height:22px;line-height:20px;padding-left:3px;font-size:11.6px}
#win .btn{position:absolute;background:#e1e1e1;border:1px solid #adadad;color:#000;text-align:center;white-space:nowrap}
#win .btn.dis{background:#cccccc;border-color:#bfbfbf;color:#838383}
#win .flt{position:absolute;background:#fff;border:1px solid #7a7a7a;height:22px;color:#6d6d6d;line-height:20px}
#win .trk{position:absolute;left:100px;width:556px;height:4px;background:#e7eaea;border-radius:0}
#win .th{position:absolute;width:11px;height:18px}
#win .val{position:absolute;left:663px;width:47px;height:14px;background:#fff;color:#000;text-align:center;line-height:14px;font-size:11.6px}
#win .val span{display:inline-block;transform:scaleX(.9)}
#win .cb{position:absolute;width:12px;height:12px;background:#fff;border:1px solid #333}
#win .cat{position:absolute;font-size:14.8px;color:#d2d2d2;white-space:nowrap}
#win .sx{display:inline-block;transform:scaleX(.93);transform-origin:0 50%;white-space:nowrap}
#win .sc{display:inline-block;transform:scaleX(.93);white-space:nowrap}
#scr{position:absolute;left:0;top:110px;width:735px;height:384px;overflow:hidden}
</style>
<div id="win">
<div class="tb">
<svg class="abs" style="left:7px;top:7px" width="14" height="16" viewBox="0 0 14 16"><path d="M3.2 0.6h6.2l1 1.6 1.6 3.2-1.6 1.8 0.3 1.2-2.2 1.5 0.4 4.6H1.6l2-2.6-0.9-4.2 1-3.2z" fill="#3a3a3a"/></svg>
<span class="tt sx">BodySlide</span>
<svg class="abs" style="left:600px;top:0" width="136" height="29" viewBox="0 0 136 29">
<path d="M19.5 14.5h10" stroke="#000" stroke-width="1" fill="none"/>
<rect x="63.5" y="9.500" width="9" height="9" stroke="#000" stroke-width="1" fill="none"/>
<path d="M107.500 9.500l10 10M117.500 9.500l-10 10" stroke="#000" stroke-width="1.1" fill="none"/>
</svg>
</div>

<div class="lbl" style="left:4px;top:37px;width:61px;transform:none;font-size:11.9px">Outfit/Body</div>
<div class="lbl" style="left:5px;top:64.5px;width:58px;transform:none">Preset</div>
<div class="cmb" style="left:73px;top:33px;width:323px"><span class="sx">CBBEVaginaMorphs</span><svg class="abs" style="right:4px;top:7px" width="9" height="6" viewBox="0 0 9 6"><path d="M0.500 0.700l4 4 4-4" stroke="#444" stroke-width="1.1" fill="none"/></svg></div>
<div class="cmb" style="left:73px;top:60px;width:323px"><span class="sx">ORGASM</span><svg class="abs" style="right:4px;top:7px" width="9" height="6" viewBox="0 0 9 6"><path d="M0.500 0.700l4 4 4-4" stroke="#444" stroke-width="1.1" fill="none"/></svg></div>
<div class="btn" style="left:401px;top:33px;width:22px;height:22px"><svg class="abs" style="left:3px;top:3px" width="14" height="14" viewBox="0 0 14 14"><path d="M1.5 1.500l11 11M12.5 1.500l-11 11" stroke="#e8131d" stroke-width="3" fill="none"/></svg></div>
<div class="btn" style="left:401px;top:60px;width:22px;height:22px"><svg class="abs" style="left:3px;top:3px" width="14" height="14" viewBox="0 0 14 14"><path d="M1.5 1.500l11 11M12.5 1.500l-11 11" stroke="#e8131d" stroke-width="3" fill="none"/></svg></div>
<div class="btn" style="left:428px;top:33px;width:22px;height:22px"><svg class="abs" style="left:3px;top:2px" width="16" height="17" viewBox="0 0 16 17"><path d="M3 0.500h5l1.500 2.500 1.500 3-1.500 2 0.300 1-2 1.500 0.400 5H1.500l2.200-3-1-4 1-3.500z" fill="#333"/><path d="M8 14c0-3 2-4.500 4.500-4.500V8l3 2.800-3 2.800v-1.600C10.500 12 9 12.500 8 14z" fill="#4a90d9"/></svg></div>
<div class="flt" style="left:454px;top:33px;width:155px"><svg class="abs" style="left:5px;top:4px" width="20" height="13" viewBox="0 0 20 13"><circle cx="5" cy="5" r="3.800" stroke="#555" stroke-width="1.500" fill="none"/><path d="M7.800 7.800l3.400 3.600" stroke="#555" stroke-width="1.800"/><path d="M13 4.500h5l-2.500 2.800z" fill="#555"/></svg><span class="abs sx" style="left:30px;top:0">Group Filter</span><svg class="abs" style="right:4px;top:3px" width="14" height="14" viewBox="0 0 14 14"><circle cx="7" cy="7" r="6.500" fill="#8e8e8e"/><path d="M4.300 4.300l5.400 5.400M9.700 4.300l-5.400 5.400" stroke="#fff" stroke-width="1.600"/></svg></div>
<div class="flt" style="left:614px;top:33px;width:117px"><svg class="abs" style="left:5px;top:4px" width="20" height="13" viewBox="0 0 20 13"><circle cx="5" cy="5" r="3.800" stroke="#555" stroke-width="1.500" fill="none"/><path d="M7.800 7.800l3.400 3.600" stroke="#555" stroke-width="1.800"/><path d="M13 4.500h5l-2.500 2.800z" fill="#555"/></svg><span class="abs sx" style="left:30px;top:0">Outfit Filter</span><svg class="abs" style="right:4px;top:3px" width="14" height="14" viewBox="0 0 14 14"><circle cx="7" cy="7" r="6.500" fill="#8e8e8e"/><path d="M4.300 4.300l5.400 5.400M9.700 4.300l-5.400 5.400" stroke="#fff" stroke-width="1.600"/></svg></div>
<div class="btn dis" style="left:428px;top:61px;width:90px;height:21px;line-height:19px"><span class="sc">Save</span></div>
<div class="btn" style="left:524px;top:61px;width:85px;height:21px;line-height:19px"><span class="sc">Save As...</span></div>
<div class="btn" style="left:615px;top:61px;width:115px;height:21px;line-height:19px"><span class="sc">Group Manager</span></div>
<div class="cat" style="left:322px;top:88px">Single Weight</div>
<div id="scr">
<div class="lbl" style="left:0;top:4.0px;width:97px;padding-left:1px">VaginaClitSize</div><div class="trk" style="top:9.0px"></div><svg class="th" style="left:100px;top:3.0px" viewBox="0 0 11 18"><path d="M0 0h11v12l-5.500 6L0 12z" fill="#0078d7"/></svg><div class="val" style="top:4.0px"><span>0%</span></div>
<div class="lbl" style="left:0;top:26.5px;width:97px;padding-left:1px">VaginaInnie</div><div class="trk" style="top:31.5px"></div><svg class="th" style="left:100px;top:25.5px" viewBox="0 0 11 18"><path d="M0 0h11v12l-5.500 6L0 12z" fill="#0078d7"/></svg><div class="val" style="top:26.5px"><span>0%</span></div>
<div class="lbl" style="left:0;top:49.0px;width:97px;padding-left:1px">VaginaInnie2</div><div class="trk" style="top:54.0px"></div><svg class="th" style="left:100px;top:48.0px" viewBox="0 0 11 18"><path d="M0 0h11v12l-5.500 6L0 12z" fill="#0078d7"/></svg><div class="val" style="top:49.0px"><span>0%</span></div>
<div class="lbl" style="left:0;top:71.5px;width:97px;padding-left:1px">VaginaLabiaSize</div><div class="trk" style="top:76.5px"></div><svg class="th" style="left:100px;top:70.5px" viewBox="0 0 11 18"><path d="M0 0h11v12l-5.500 6L0 12z" fill="#0078d7"/></svg><div class="val" style="top:71.5px"><span>0%</span></div>
<div class="lbl" style="left:0;top:94.0px;width:97px;padding-left:1px">VaginaPenetrate</div><div class="trk" style="top:99.0px"></div><svg class="th" style="left:100px;top:93.0px" viewBox="0 0 11 18"><path d="M0 0h11v12l-5.500 6L0 12z" fill="#0078d7"/></svg><div class="val" style="top:94.0px"><span>0%</span></div>
<div class="lbl" style="left:0;top:116.5px;width:97px;padding-left:1px">VaginaNarrower</div><div class="trk" style="top:121.5px"></div><svg class="th" style="left:100px;top:115.5px" viewBox="0 0 11 18"><path d="M0 0h11v12l-5.500 6L0 12z" fill="#0078d7"/></svg><div class="val" style="top:116.5px"><span>0%</span></div>
<div class="lbl" style="left:0;top:139.0px;width:97px;padding-left:1px">VaginaSpread</div><div class="trk" style="top:144.0px"></div><svg class="th" style="left:100px;top:138.0px" viewBox="0 0 11 18"><path d="M0 0h11v12l-5.500 6L0 12z" fill="#0078d7"/></svg><div class="val" style="top:139.0px"><span>0%</span></div>
<div class="lbl" style="left:0;top:161.5px;width:97px;padding-left:1px">VaginaSize</div><div class="trk" style="top:166.5px"></div><svg class="th" style="left:100px;top:160.5px" viewBox="0 0 11 18"><path d="M0 0h11v12l-5.500 6L0 12z" fill="#0078d7"/></svg><div class="val" style="top:161.5px"><span>0%</span></div>
<div class="lbl" style="left:0;top:184.0px;width:97px;padding-left:1px">AnusBack</div><div class="trk" style="top:189.0px"></div><svg class="th" style="left:100px;top:183.0px" viewBox="0 0 11 18"><path d="M0 0h11v12l-5.500 6L0 12z" fill="#0078d7"/></svg><div class="val" style="top:184.0px"><span>0%</span></div>
<div class="lbl" style="left:0;top:206.5px;width:97px;padding-left:1px">AnusDonut</div><div class="trk" style="top:211.5px"></div><svg class="th" style="left:100px;top:205.5px" viewBox="0 0 11 18"><path d="M0 0h11v12l-5.500 6L0 12z" fill="#0078d7"/></svg><div class="val" style="top:206.5px"><span>0%</span></div>
<div class="lbl" style="left:0;top:229.0px;width:97px;padding-left:1px">AnusPenetrate</div><div class="trk" style="top:234.0px"></div><svg class="th" style="left:100px;top:228.0px" viewBox="0 0 11 18"><path d="M0 0h11v12l-5.500 6L0 12z" fill="#0078d7"/></svg><div class="val" style="top:229.0px"><span>0%</span></div>
<div class="lbl" style="left:0;top:251.5px;width:97px;padding-left:1px">ButtcheeksSpread</div><div class="trk" style="top:256.5px"></div><svg class="th" style="left:100px;top:250.5px" viewBox="0 0 11 18"><path d="M0 0h11v12l-5.500 6L0 12z" fill="#0078d7"/></svg><div class="val" style="top:251.5px"><span>0%</span></div>
<div class="cb" style="left:74px;top:273px"><svg class="abs" style="left:0;top:0" width="10" height="10" viewBox="0 0 10 10"><path d="M1.500 5l2.500 2.600 4.600-5.600" stroke="#222" stroke-width="1.400" fill="none"/></svg></div><div class="cat" style="left:93px;top:270px">Full Body</div>
<div class="lbl" style="left:0;top:292px;width:97px;padding-left:1px">Vanilla FO4</div><div class="trk" style="top:297px"></div><svg class="th" style="left:100px;top:291.0px" viewBox="0 0 11 18"><path d="M0 0h11v12l-5.500 6L0 12z" fill="#0078d7"/></svg><div class="val" style="top:292px"><span>0%</span></div>
<div class="lbl" style="left:0;top:314.5px;width:97px;padding-left:1px">7B Upper</div><div class="trk" style="top:319.5px"></div><svg class="th" style="left:100px;top:313.5px" viewBox="0 0 11 18"><path d="M0 0h11v12l-5.500 6L0 12z" fill="#0078d7"/></svg><div class="val" style="top:314.5px"><span>0%</span></div>
<div class="lbl" style="left:0;top:337px;width:97px;padding-left:1px">7B Lower</div><div class="trk" style="top:342px"></div><svg class="th" style="left:236px;top:336.0px" viewBox="0 0 11 18"><path d="M0 0h11v12l-5.500 6L0 12z" fill="#0078d7"/></svg><div class="val" style="top:337px"><span>25%</span></div>
<div class="cb" style="left:74px;top:358.5px"><svg class="abs" style="left:0;top:0" width="10" height="10" viewBox="0 0 10 10"><path d="M1.500 5l2.500 2.600 4.600-5.600" stroke="#222" stroke-width="1.400" fill="none"/></svg></div><div class="cat" style="left:93px;top:355.5px">Nipples</div>
<div class="lbl" style="left:0;top:377.6px;width:97px;padding-left:1px">Cone</div><div class="trk" style="top:382.6px"></div><svg class="th" style="left:100px;top:376.6px" viewBox="0 0 11 18"><path d="M0 0h11v12l-5.500 6L0 12z" fill="#0078d7"/></svg><div class="val" style="top:377.6px"><span>0%</span></div>
</div>
<div class="abs" style="left:719px;top:110px;width:16px;height:384px;background:#f0f0f0"></div>
<div class="abs" style="left:720px;top:126px;width:14px;height:55px;background:#cdcdcd"></div>
<svg class="abs" style="left:723px;top:115px" width="9" height="6" viewBox="0 0 9 6"><path d="M0.600 5l3.900-4 3.900 4" stroke="#505050" stroke-width="1.800" fill="none"/></svg>
<svg class="abs" style="left:723px;top:483px" width="9" height="6" viewBox="0 0 9 6"><path d="M0.600 1l3.900 4 3.900-4" stroke="#505050" stroke-width="1.800" fill="none"/></svg>

<div class="btn" style="left:301px;top:500px;width:118px;height:19px;line-height:17px"><span class="sc">Preview</span></div>
<div class="cb" style="left:10px;top:531px;border-color:#333"><svg class="abs" style="left:0;top:0" width="10" height="10" viewBox="0 0 10 10"><path d="M1.500 5l2.500 2.600 4.600-5.600" stroke="#222" stroke-width="1.400" fill="none"/></svg></div>
<div class="abs" style="left:28px;top:530px;white-space:nowrap;font-size:11.5px;transform:scaleX(.985);transform-origin:0 50%"><span style="color:#27e6d6">meshes\actors\character\characterassets\femalebody.nif</span> <span style="color:#c8c8c8;margin-left:1px">(right-click to view conflicts)</span></div>
<div class="btn" style="left:10px;top:560px;width:71px;height:19px;line-height:17px"><span class="sc">Batch Build...</span></div>
<div class="cb" style="left:91px;top:564px"><svg class="abs" style="left:0;top:0" width="10" height="10" viewBox="0 0 10 10"><path d="M1.500 5l2.500 2.600 4.600-5.600" stroke="#222" stroke-width="1.400" fill="none"/></svg></div>
<div class="abs" style="left:106px;top:563px;white-space:nowrap;transform:scaleX(.975);transform-origin:0 50%">Build Morphs</div>
<div class="btn" style="left:301px;top:555px;width:118px;height:40px;line-height:38px;font-size:16px"><span class="sc">Build</span></div>
<div class="btn" style="left:544px;top:560px;width:21px;height:20px"><svg class="abs" style="left:1px;top:0px" width="18" height="18" viewBox="0 0 18 18"><circle cx="9" cy="9" r="8" fill="#0a6fd8"/><circle cx="9" cy="5" r="1.400" fill="#fff"/><rect x="7.800" y="7.500" width="2.400" height="6.500" fill="#fff"/></svg></div>
<div class="btn" style="left:576px;top:560px;width:68px;height:19px;line-height:17px"><span class="sc">Settings</span></div>
<div class="btn" style="left:655px;top:560px;width:70px;height:19px;line-height:17px"><span>Outfit Studio</span></div>
</div>
<style>
#tb{position:absolute;left:0;top:1042px;width:1920px;height:38px;background:#1a1f2b;font-family:"Liberation Sans",sans-serif}
#tb .sb{position:absolute;left:45px;top:0;width:322px;height:38px;background:#f2f2f2;border-top:1px solid #fafafa}
#tb .sb span{position:absolute;left:38px;top:10px;font-size:14.6px;color:#2b2b2b;white-space:nowrap;transform:scaleX(.94);transform-origin:0 50%}
#tb .ic{position:absolute;top:7px;width:24px;height:24px}
#tb .run{position:absolute;top:36px;height:2px;background:#76b9ed}
#tb .tray{position:absolute;color:#fff;font-size:11.5px;white-space:nowrap;text-align:center;transform:scaleX(.92)}
</style>
<div id="tb">
<svg class="abs" style="left:15px;top:11px" width="16" height="16" viewBox="0 0 16 16"><path d="M0 2.300L6.500 1.400V7.600H0zM7.300 1.300L16 0V7.600H7.300zM0 8.400H6.500V14.600L0 13.700zM7.300 8.400H16V16L7.300 14.700z" fill="#fff"/></svg>
<div class="sb"><svg class="abs" style="left:11px;top:10px" width="17" height="17" viewBox="0 0 17 17"><circle cx="10.500" cy="6.500" r="5" stroke="#333" stroke-width="1.300" fill="none"/><path d="M7 10L1 16" stroke="#333" stroke-width="1.400"/></svg><span>Введите здесь текст для поиска</span></div>
<div class="abs" style="left:975px;top:0;width:46px;height:38px;background:#464b57"></div>

<svg class="ic" style="left:380.8px" viewBox="0 0 24 24"><ellipse cx="12" cy="12" rx="10.500" ry="11" fill="#e0142c"/><ellipse cx="12" cy="12" rx="4.200" ry="8" fill="#1a1f2b"/><path d="M12 1a10.500 11 0 0 1 0 22 8 11 0 0 0 0-22z" fill="#a80e22" opacity=".55"/></svg>
<svg class="ic" style="left:426.8px" viewBox="0 0 24 24"><path d="M8 6V4.500a4 3.500 0 0 1 8 0V6" stroke="#2aa4e8" stroke-width="1.600" fill="none"/><rect x="1.500" y="5.500" width="21" height="17.500" rx="2.500" fill="#f3f3f3"/><rect x="7.500" y="10" width="4" height="4" fill="#f25022"/><rect x="12.500" y="10" width="4" height="4" fill="#7fba00"/><rect x="7.500" y="15" width="4" height="4" fill="#00a4ef"/><rect x="12.500" y="15" width="4" height="4" fill="#ffb900"/></svg>
<svg class="ic" style="left:473.7px" viewBox="0 0 24 24"><path d="M12 0.500l3 1 2-0.500 3 3-0.800 2.500 1 3-2 8-6.200 6-6.200-6-2-8 1-3L4 4l3-3 2 0.500z" fill="#fb542b"/><path d="M12 5.500l3.500-0.800 2.500 3.300-1.500 3 0.500 2-3 2.500-2 2.500-2-2.500-3-2.500 0.500-2-1.500-3 2.500-3.300z" fill="#fff"/><path d="M12 9.500l1.500 3-1.500 3.500-1.500-3.500z" fill="#fb542b"/></svg>
<svg class="ic" style="left:520.7px" viewBox="0 0 24 24"><defs><linearGradient id="eg1" x1="0" y1="0" x2="1" y2="1"><stop offset="0" stop-color="#35c1f1"/><stop offset="1" stop-color="#0c59a4"/></linearGradient><linearGradient id="eg2" x1="0" y1="0" x2="1" y2="0"><stop offset="0" stop-color="#2fb8e8"/><stop offset="1" stop-color="#6fd648"/></linearGradient></defs><circle cx="12" cy="12" r="11.500" fill="url(#eg1)"/><path d="M1 10C2 4 6.500 0.500 12 0.500c6.500 0 11.500 4.500 11.500 10 0 3.500-2.500 5.500-5.500 5.500-2.500 0-4-1-4-2.500 0-1 1-1.500 1-3 0-2-2-3.500-4.500-3.500C6 7 2 9 1 10z" fill="url(#eg2)"/><path d="M9.500 13c0 5 4 8.500 9 7.500-2 2-4.500 3-7 3C5.500 23.500 1.500 18 3 13c1-3 4-5 7.500-5-1 1.500-1 3-1 5z" fill="#1565b8"/></svg>
<svg class="ic" style="left:566.7px" viewBox="0 0 24 24"><path d="M1 3.500h8l2 2.500h12v3H1z" fill="#e8a920"/><rect x="1" y="7" width="22" height="15" fill="#ffd75e"/><path d="M5 22v-7.500h14V22h-3.500v-4.500h-7V22z" fill="#3a8ee6"/></svg>
<svg class="ic" style="left:613.0px" viewBox="0 0 24 24"><defs><radialGradient id="ff1" cx="0.600" cy="0.200" r="0.900"><stop offset="0" stop-color="#ffe226"/><stop offset="0.500" stop-color="#ff8a16"/><stop offset="1" stop-color="#e31587"/></radialGradient></defs><path d="M12 2c2-1 3-1.500 3.500-2 0.500 2 2 3 3 4.500C21.500 6.500 23 9.500 23 13c0 6-5 10.500-11 10.500S1 19 1 13c0-3 1-5.500 2.500-7 0 1 0.500 2 1 2.500C5 6 8 3.500 12 2z" fill="url(#ff1)"/><circle cx="12.500" cy="13" r="5.500" fill="#7542e5"/><path d="M7 10c2-2 5-2 7 0-2 0-3 1-3 2.500S9 15 7 14z" fill="#ff9a1f"/></svg>
<svg class="ic" style="left:659.7px" viewBox="0 0 24 24"><circle cx="12" cy="12" r="11" fill="#0a0e18" stroke="#1ea0f0" stroke-width="1.600"/><text x="12.300" y="18" font-family="'Liberation Sans',sans-serif" font-weight="bold" font-style="italic" font-size="17" fill="#1ea8ff" text-anchor="middle">C</text></svg>
<svg class="ic" style="left:706.3px" viewBox="0 0 24 24"><rect x="1" y="1" width="22" height="22" rx="4" fill="#0b0b0d"/><path d="M2 6V4a2 2 0 0 1 2-2h2M18 2h2a2 2 0 0 1 2 2v2M22 18v2a2 2 0 0 1-2 2h-2M6 22H4a2 2 0 0 1-2-2v-2" stroke="#e8222e" stroke-width="1.400" fill="none"/><rect x="5" y="7.500" width="11" height="9" rx="2" fill="#f03a4a"/><path d="M16 11l4-2.500v7L16 13z" fill="#f03a4a"/><circle cx="9.500" cy="12" r="2" fill="none" stroke="#fff" stroke-width="1.200"/></svg>
<svg class="ic" style="left:752.9px" viewBox="0 0 24 24"><defs><linearGradient id="wg" x1="0" y1="1" x2="1" y2="0"><stop offset="0" stop-color="#7a3be0"/><stop offset="1" stop-color="#22b4f0"/></linearGradient></defs><circle cx="12" cy="12" r="10.800" fill="#171a30" stroke="url(#wg)" stroke-width="1.800"/><rect x="6" y="8" width="4.300" height="4" fill="#5a6ae8"/><rect x="11" y="8" width="4.300" height="4" fill="#5a6ae8"/><rect x="6" y="12.700" width="4.300" height="4" fill="#5a6ae8"/><rect x="11" y="12.700" width="4.300" height="4" fill="#5a6ae8"/><path d="M17 6l3 4h-2v5h-2v-5h-2z" fill="#36a8f4"/></svg>
<svg class="ic" style="left:799.3px" viewBox="0 0 24 24"><rect x="0" y="0" width="24" height="24" rx="5" fill="#1d2140"/><path d="M12 3.500c3 1.500 5.500 2 8 2 0 7-2 12-8 15.500C6 17.500 4 12.500 4 5.500c2.500 0 5-0.500 8-2z" fill="#1aa6f0"/><path d="M16.500 7.500l-2 6.500-2.200-2-3.800 4.500 2.300-5.500-2.300-1.200z" fill="#1d2140"/></svg>
<svg class="ic" style="left:845.3px" viewBox="0 0 24 24"><circle cx="12" cy="12" r="10.800" fill="#1c0b10" stroke="#e0202c" stroke-width="1.600"/><circle cx="11" cy="12.500" r="5" fill="#e0202c"/><circle cx="11" cy="12.500" r="2.300" fill="#1c0b10"/><path d="M15 5l3.500 4h-2v4h-3V9h-2z" fill="#ff3a3a"/></svg>
<svg class="ic" style="left:892.3px" viewBox="0 0 24 24"><circle cx="12" cy="12" r="12" fill="#f5f5f5"/><path d="M6.500 5.500L12 12.500V20M17.500 5.500L12 12.500" stroke="#e8141e" stroke-width="2.300" fill="none"/></svg>
<svg class="ic" style="left:938.7px" viewBox="0 0 24 24"><path d="M0.500 6.500h23l-1.500 8.500h-20z" fill="#050505"/><path d="M7 17.500L22.500 14l-1 5z" fill="#22b84a"/><text x="12" y="12.800" font-family="'Liberation Sans',sans-serif" font-weight="bold" font-style="italic" font-size="6.500" fill="#fff" text-anchor="middle">NMM</text></svg>
<svg class="ic" style="left:986.0px" viewBox="0 0 24 24"><path d="M7.500 1h6.500c0 4 2.500 6 2.500 9s-2.500 4.500-2.500 8l0.500 5H6l2.500-5c0.500-3-1.500-5-1.500-9 0-3 1-5.500 0.500-8z" fill="#2d2d30"/><path d="M13.500 1c1.500 3.500 4.500 6 4.500 9.500 0 3-2.500 4-3 7" stroke="#fff" stroke-width="1.300" fill="none"/></svg>
<div class="run" style="left:886px;width:38px"></div>
<div class="run" style="left:932px;width:39px"></div>
<div class="run" style="left:975px;width:46px"></div>
<svg class="abs" style="left:1709px;top:14px" width="13" height="9" viewBox="0 0 13 9"><path d="M0.700 7.800l5.800-6 5.800 6" stroke="#fff" stroke-width="1.200" fill="none"/></svg>
<svg class="abs" style="left:1731px;top:12.500px" width="15.500" height="13.500" viewBox="0 0 17 15"><rect x="3.500" y="1.500" width="12.500" height="9" stroke="#fff" stroke-width="1" fill="none"/><path d="M6 13.500h7M9.500 10.500v3" stroke="#fff" stroke-width="1"/><rect x="0.500" y="0.500" width="3" height="4.500" stroke="#fff" stroke-width="0.900" fill="#1a1f2b"/><path d="M2 5v8.500h3" stroke="#fff" stroke-width="0.900" fill="none"/></svg>
<svg class="abs" style="left:1753px;top:12.500px" width="16" height="13.500" viewBox="0 0 18 15"><path d="M1 5h3l4-3.500v12L4 10H1z" stroke="#fff" stroke-width="1" fill="none"/><path d="M10.500 5a3.500 3.500 0 0 1 0 5" stroke="#fff" stroke-width="1" fill="none"/><path d="M12.500 3a6 6 0 0 1 0 9" stroke="#fff" stroke-opacity=".7" stroke-width="1" fill="none"/><path d="M14.500 1.200a8.500 8.500 0 0 1 0 12.600" stroke="#fff" stroke-opacity=".35" stroke-width="1" fill="none"/></svg>
<div class="tray" style="left:1769px;top:13px;width:40px">РУС</div>
<div class="tray" style="left:1800px;top:5px;width:74px">16:21</div>
<div class="tray" style="left:1800px;top:22px;width:74px">20.03.2022</div>
<svg class="abs" style="left:1882px;top:12px" width="16" height="16" viewBox="0 0 17 17"><path d="M0.500 0.500h16v12h-5.500l-2.500 2.500-2.500-2.500H0.500z" stroke="#fff" stroke-width="1" fill="none"/></svg>
<div class="abs" style="left:1915px;top:0;width:1px;height:38px;background:#6a6e78"></div>
</div>
</div>
</body>
</html>
